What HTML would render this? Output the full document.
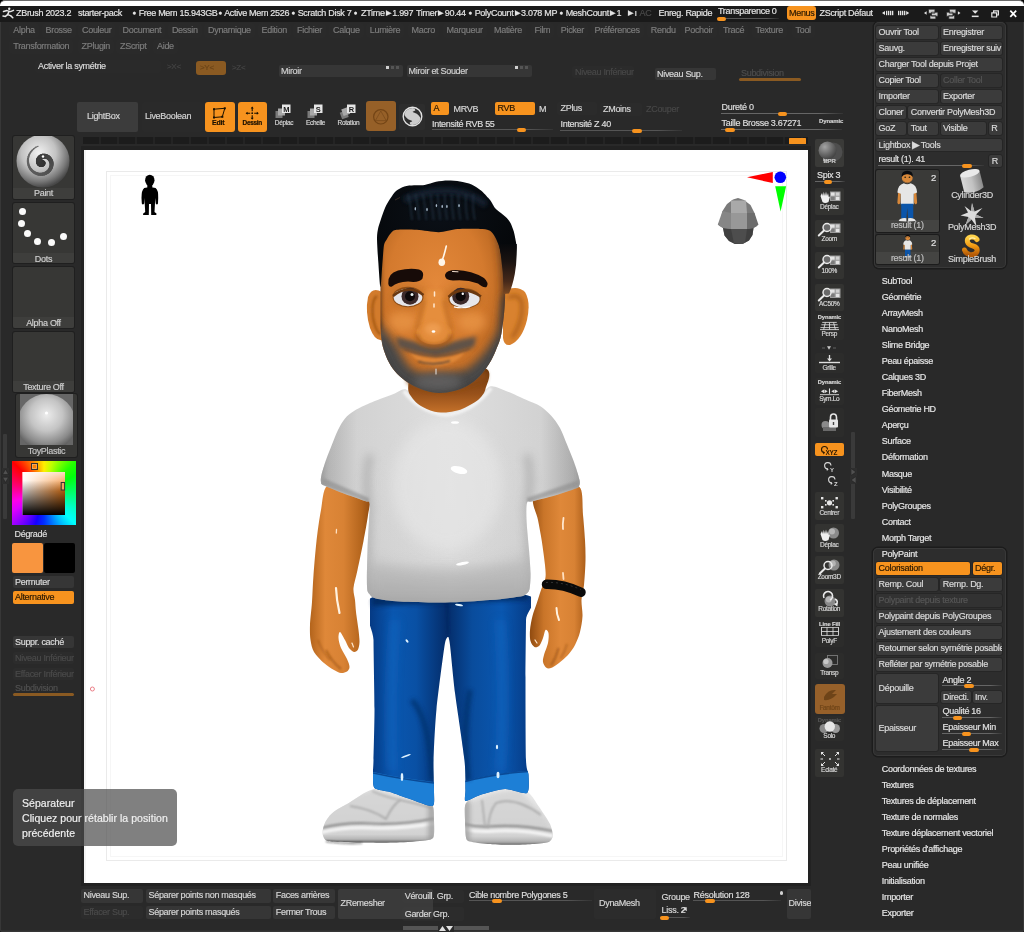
<!DOCTYPE html>
<html lang="fr"><head><meta charset="utf-8"><title>ZBrush 2023.2</title>
<style>
html,body{margin:0;padding:0;background:#000;}
body{width:1024px;height:932px;overflow:hidden;position:relative;font-family:"Liberation Sans",sans-serif;font-size:9px;letter-spacing:-0.3px;color:#d8d8d8;-webkit-text-stroke:0.18px;}
#w{position:absolute;left:0;top:0;width:1024px;height:932px;background:#000;overflow:hidden;opacity:0.999;}
#w div{position:absolute;white-space:nowrap;}
#w svg{position:absolute;overflow:visible;}
.t{white-space:nowrap;}
.b{overflow:hidden;}
.dim{color:#6a6a6a;}
.m{color:#7c7c7c;}
.lst{color:#e6e6e6;}
</style></head>
<body>
<div id="w">
<div style="left:0px;top:0px;width:1024px;height:7px;background:#fff;border-radius:5px 5px 0 0;border-top:1px solid #6a6a6a;box-sizing:border-box;"></div>
<div style="left:0px;top:5.6px;width:1024px;height:926.4px;background:#292929;border-radius:0 0 2.5px 2.5px;box-shadow:inset 1px 0 0 #373737, inset -1px 0 0 #373737, inset 0 -1.5px 0 #363636;"></div>
<div style="left:0px;top:5.6px;width:1024px;height:16.2px;background:#1a1a1a;"></div>
<svg style="left:2px;top:7px" width="13" height="12" viewBox="0 0 13 12"><g fill="none" stroke="#e8e8e8" stroke-width="1.5" stroke-linecap="round" stroke-linejoin="round"><circle cx="7.2" cy="1.8" r="1.2" fill="#e8e8e8" stroke="none"/><path d="M1.5 4.5 L5 3.6 L8.5 4.6 L11.5 3.4"/><path d="M7 4.6 L5.6 7.6 L8.6 8.6 L10.8 10.8"/><path d="M5.6 7.6 L3.4 9.4 L1 9"/></g></svg>
<div class="t" style="left:16px;top:7px;height:12px;line-height:12px;color:#e4e4e4;">ZBrush 2023.2</div>
<div class="t" style="left:78px;top:7px;height:12px;line-height:12px;color:#e4e4e4;">starter-pack</div>
<div class="t" style="left:132.5px;top:7px;height:12px;line-height:12px;color:#e4e4e4;"><span style="font-size:6.5px;letter-spacing:0;position:relative;top:-0.8px">●</span> Free Mem 15.943GB</div>
<div class="t" style="left:218.5px;top:7px;height:12px;line-height:12px;color:#e4e4e4;"><span style="font-size:6.5px;letter-spacing:0;position:relative;top:-0.8px">●</span> Active Mem 2526</div>
<div class="t" style="left:291.5px;top:7px;height:12px;line-height:12px;color:#e4e4e4;"><span style="font-size:6.5px;letter-spacing:0;position:relative;top:-0.8px">●</span> Scratch Disk 7 <span style="font-size:6.5px;letter-spacing:0;position:relative;top:-0.8px">●</span></div>
<div class="t" style="left:361px;top:7px;height:12px;line-height:12px;color:#e4e4e4;">ZTime<span style="font-size:6.5px;letter-spacing:0;position:relative;top:-0.8px;padding:0 1.4px 0 1.2px">▶</span>1.997</div>
<div class="t" style="left:416px;top:7px;height:12px;line-height:12px;color:#e4e4e4;">Timer<span style="font-size:6.5px;letter-spacing:0;position:relative;top:-0.8px;padding:0 1.4px 0 1.2px">▶</span>90.44</div>
<div class="t" style="left:468.5px;top:7px;height:12px;line-height:12px;color:#e4e4e4;"><span style="font-size:6.5px;letter-spacing:0;position:relative;top:-0.8px">●</span> PolyCount<span style="font-size:6.5px;letter-spacing:0;position:relative;top:-0.8px;padding:0 1.4px 0 1.2px">▶</span>3.078 MP</div>
<div class="t" style="left:559.5px;top:7px;height:12px;line-height:12px;color:#e4e4e4;"><span style="font-size:6.5px;letter-spacing:0;position:relative;top:-0.8px">●</span> MeshCount<span style="font-size:6.5px;letter-spacing:0;position:relative;top:-0.8px;padding:0 1.4px 0 1.2px">▶</span>1</div>
<div class="t" style="left:627px;top:7px;height:12px;line-height:12px;color:#e4e4e4;"><span style="font-size:6.5px;letter-spacing:0;position:relative;top:-0.8px;padding:0 1.4px 0 1.2px">▶</span>ı</div>
<div class="t" style="left:658.5px;top:7px;height:12px;line-height:12px;color:#e4e4e4;">Enreg. Rapide</div>
<div class="t" style="left:819.5px;top:7px;height:12px;line-height:12px;color:#e4e4e4;">ZScript Défaut</div>
<div class="t" style="left:639.5px;top:7px;height:12px;line-height:12px;color:#4a4a4a;">AC</div>
<div class="t" style="left:718px;top:5px;height:12px;line-height:12px;color:#e4e4e4;">Transparence 0</div>
<div style="left:717px;top:18px;width:62px;height:1px;background:linear-gradient(90deg,#555 0,#555 80%,rgba(90,90,90,0.2) 100%)"></div>
<div style="left:717px;top:16.5px;width:9px;height:4px;background:#f7931e;border-radius:2px"></div>
<div class="b" style="left:787px;top:6px;width:28.5px;height:14px;line-height:14px;background:#f7931e;border-radius:3px;padding-left:2px;box-sizing:border-box;color:#2a1800;">Menus</div>
<svg style="left:878px;top:8px" width="140" height="12" viewBox="0 0 140 12"><g fill="#e4e4e4"><path d="M4 5 L7 3 L7 7 Z"/><rect x="8" y="2.8" width="1.3" height="4.4"/><rect x="10" y="2.8" width="1.3" height="4.4"/><rect x="12" y="2.8" width="1.3" height="4.4"/><rect x="14" y="2.8" width="1.3" height="4.4"/><rect x="20" y="2.8" width="1.3" height="4.4"/><rect x="22" y="2.8" width="1.3" height="4.4"/><rect x="24" y="2.8" width="1.3" height="4.4"/><rect x="26" y="2.8" width="1.3" height="4.4"/><path d="M31.2 5 L28.2 3 L28.2 7 Z"/><path d="M46 5 L48.6 3.2 L48.6 6.8 Z"/><g fill="#cfcfcf" stroke="#222" stroke-width="0.7"><path d="M50.5 1.2h6.4v4h-6.4z M53.5 4.2h6.4v4h-6.4z M52 7.6h5.8v3.4h-5.8z"/><path d="M71.5 1.2h6.4v4h-6.4z M68.5 4.2h6.4v4h-6.4z M70.8 7.6h5.8v3.4h-5.8z"/></g><path d="M82.5 5 L79.9 3.2 L79.9 6.8 Z"/><path d="M94 2.6h6.4l-3.2 3.2z"/><rect x="93.8" y="7.6" width="6.8" height="1.5"/><path d="M113.8 4.8h4.8v4.2h-4.8z M115.6 4.6v-1.8h4.8v4.2h-1.6" fill="none" stroke="#e4e4e4" stroke-width="1.2"/><path d="M132.3 2.7 L138.2 8.8 M138.2 2.7 L132.3 8.8" stroke="#fff" stroke-width="1.7" fill="none"/></g></svg>
<div style="left:9.3px;top:23px;width:29.5px;height:15px;background:#2a2a2a;border-radius:3px;"></div>
<div class="t m" style="left:13.3px;top:24.0px;height:12px;line-height:12px;">Alpha</div>
<div style="left:41.5px;top:23px;width:34.2px;height:15px;background:#2a2a2a;border-radius:3px;"></div>
<div class="t m" style="left:45.5px;top:24.0px;height:12px;line-height:12px;">Brosse</div>
<div style="left:78px;top:23px;width:37.4px;height:15px;background:#2a2a2a;border-radius:3px;"></div>
<div class="t m" style="left:82px;top:24.0px;height:12px;line-height:12px;">Couleur</div>
<div style="left:118.6px;top:23px;width:46.6px;height:15px;background:#2a2a2a;border-radius:3px;"></div>
<div class="t m" style="left:122.6px;top:24.0px;height:12px;line-height:12px;">Document</div>
<div style="left:167.9px;top:23px;width:33.7px;height:15px;background:#2a2a2a;border-radius:3px;"></div>
<div class="t m" style="left:171.9px;top:24.0px;height:12px;line-height:12px;">Dessin</div>
<div style="left:204px;top:23px;width:50.8px;height:15px;background:#2a2a2a;border-radius:3px;"></div>
<div class="t m" style="left:208px;top:24.0px;height:12px;line-height:12px;">Dynamique</div>
<div style="left:257.5px;top:23px;width:33.4px;height:15px;background:#2a2a2a;border-radius:3px;"></div>
<div class="t m" style="left:261.5px;top:24.0px;height:12px;line-height:12px;">Edition</div>
<div style="left:293px;top:23px;width:32.9px;height:15px;background:#2a2a2a;border-radius:3px;"></div>
<div class="t m" style="left:297px;top:24.0px;height:12px;line-height:12px;">Fichier</div>
<div style="left:329px;top:23px;width:34.7px;height:15px;background:#2a2a2a;border-radius:3px;"></div>
<div class="t m" style="left:333px;top:24.0px;height:12px;line-height:12px;">Calque</div>
<div style="left:365.75px;top:23px;width:38.4px;height:15px;background:#2a2a2a;border-radius:3px;"></div>
<div class="t m" style="left:369.75px;top:24.0px;height:12px;line-height:12px;">Lumière</div>
<div style="left:407.5px;top:23px;width:31.5px;height:15px;background:#2a2a2a;border-radius:3px;"></div>
<div class="t m" style="left:411.5px;top:24.0px;height:12px;line-height:12px;">Macro</div>
<div style="left:442.5px;top:23px;width:44.1px;height:15px;background:#2a2a2a;border-radius:3px;"></div>
<div class="t m" style="left:446.5px;top:24.0px;height:12px;line-height:12px;">Marqueur</div>
<div style="left:490px;top:23px;width:35.9px;height:15px;background:#2a2a2a;border-radius:3px;"></div>
<div class="t m" style="left:494px;top:24.0px;height:12px;line-height:12px;">Matière</div>
<div style="left:530.5px;top:23px;width:23.8px;height:15px;background:#2a2a2a;border-radius:3px;"></div>
<div class="t m" style="left:534.5px;top:24.0px;height:12px;line-height:12px;">Film</div>
<div style="left:556.75px;top:23px;width:31.2px;height:15px;background:#2a2a2a;border-radius:3px;"></div>
<div class="t m" style="left:560.75px;top:24.0px;height:12px;line-height:12px;">Picker</div>
<div style="left:590.5px;top:23px;width:53.2px;height:15px;background:#2a2a2a;border-radius:3px;"></div>
<div class="t m" style="left:594.5px;top:24.0px;height:12px;line-height:12px;">Préférences</div>
<div style="left:646.75px;top:23px;width:33.0px;height:15px;background:#2a2a2a;border-radius:3px;"></div>
<div class="t m" style="left:650.75px;top:24.0px;height:12px;line-height:12px;">Rendu</div>
<div style="left:680.5px;top:23px;width:36.4px;height:15px;background:#2a2a2a;border-radius:3px;"></div>
<div class="t m" style="left:684.5px;top:24.0px;height:12px;line-height:12px;">Pochoir</div>
<div style="left:719px;top:23px;width:29.171875px;height:15px;background:#2a2a2a;border-radius:3px;"></div>
<div class="t m" style="left:723px;top:24.0px;height:12px;line-height:12px;">Tracé</div>
<div style="left:751.5px;top:23px;width:35.4px;height:15px;background:#2a2a2a;border-radius:3px;"></div>
<div class="t m" style="left:755.5px;top:24.0px;height:12px;line-height:12px;">Texture</div>
<div style="left:791.5px;top:23px;width:23.3px;height:15px;background:#2a2a2a;border-radius:3px;"></div>
<div class="t m" style="left:795.5px;top:24.0px;height:12px;line-height:12px;">Tool</div>
<div style="left:9.3px;top:39px;width:63.971875px;height:15px;background:#2a2a2a;border-radius:3px;"></div>
<div class="t m" style="left:13.3px;top:40.0px;height:12px;line-height:12px;">Transformation</div>
<div style="left:77.6px;top:39px;width:36.4px;height:15px;background:#2a2a2a;border-radius:3px;"></div>
<div class="t m" style="left:81.6px;top:40.0px;height:12px;line-height:12px;">ZPlugin</div>
<div style="left:116px;top:39px;width:34.4px;height:15px;background:#2a2a2a;border-radius:3px;"></div>
<div class="t m" style="left:120px;top:40.0px;height:12px;line-height:12px;">ZScript</div>
<div style="left:153px;top:39px;width:24.8px;height:15px;background:#2a2a2a;border-radius:3px;"></div>
<div class="t m" style="left:157px;top:40.0px;height:12px;line-height:12px;">Aide</div>
<div style="left:35px;top:60px;width:126px;height:12.5px;background:#2a2a2a;border-radius:2px;"></div>
<div class="t" style="left:38px;top:60.0px;height:12px;line-height:12px;color:#dcdcdc;">Activer la symétrie</div>
<div class="t" style="left:167px;top:61.0px;height:12px;line-height:12px;color:#454545;font-size:8px">&gt;X&lt;</div>
<div style="left:196px;top:61px;width:30px;height:14px;background:#8a5a22;border-radius:3px;"></div>
<div class="t" style="left:200px;top:61.5px;height:12px;line-height:12px;color:#6b4418;font-size:8px">&gt;Y&lt;</div>
<div class="t" style="left:232px;top:62.0px;height:12px;line-height:12px;color:#454545;font-size:8px">&gt;Z&lt;</div>
<div class="b" style="left:279px;top:64.5px;width:124px;height:12.5px;line-height:12.5px;background:#363636;border-radius:2px;padding-left:2px;box-sizing:border-box;color:#cfcfcf;">Miroir</div>
<div class="b" style="left:406.5px;top:64.5px;width:125.5px;height:12.5px;line-height:12.5px;background:#363636;border-radius:2px;padding-left:2px;box-sizing:border-box;color:#cfcfcf;">Miroir et Souder</div>
<div style="left:386px;top:66px;width:3px;height:3px;background:#d0d0d0;"></div>
<div style="left:515px;top:66px;width:3px;height:3px;background:#d0d0d0;"></div>
<div style="left:391px;top:66px;width:3px;height:3px;background:#555;"></div>
<div style="left:520px;top:66px;width:3px;height:3px;background:#555;"></div>
<div style="left:396px;top:66px;width:3px;height:3px;background:#555;"></div>
<div style="left:525px;top:66px;width:3px;height:3px;background:#555;"></div>
<div class="b" style="left:572px;top:66px;width:62px;height:12px;line-height:12px;background:#2b2b2b;border-radius:2px;padding-left:3px;box-sizing:border-box;color:#484848;">Niveau Inférieur</div>
<div class="b" style="left:655px;top:67.5px;width:61px;height:12px;line-height:12px;background:#363636;border-radius:2px;padding-left:2px;box-sizing:border-box;color:#d8d8d8;">Niveau Sup.</div>
<div class="t" style="left:741px;top:67.0px;height:12px;line-height:12px;color:#4d4d4d">Subdivision</div>
<div style="left:739px;top:78px;width:62px;height:3px;background:#8a5a22;border-radius:1.5px;"></div>
<div class="b" style="left:77px;top:102px;width:61px;height:29.5px;line-height:29.5px;background:#3c3c3c;border-radius:2px;padding-left:10px;box-sizing:border-box;color:#d4d4d4;">LightBox</div>
<div class="b" style="left:141.5px;top:102px;width:61px;height:29.5px;line-height:29.5px;background:#2a2a2a;border-radius:2px;padding-left:3.5px;box-sizing:border-box;color:#d4d4d4;">LiveBoolean</div>
<div style="left:205px;top:102px;width:29.5px;height:29.5px;background:#f7931e;border-radius:3px;"></div>
<div style="left:237.5px;top:102px;width:29.5px;height:29.5px;background:#f7931e;border-radius:3px;"></div>
<svg style="left:205px;top:102px" width="30" height="30" viewBox="0 0 30 30"><path d="M9 7.2 L19.8 6.3 L17.3 14.8 L9 15.5 Z" fill="none" stroke="#1a1000" stroke-width="1"/><g fill="#1a1000"><rect x="8" y="6.2" width="2" height="2"/><rect x="18.8" y="5.3" width="2" height="2"/><rect x="16.3" y="13.8" width="2" height="2"/><rect x="8" y="14.5" width="2" height="2"/></g></svg>
<div class="t" style="left:212px;top:119.0px;height:8px;line-height:8px;color:#1a1000;font-size:7px;letter-spacing:-0.2px;font-weight:bold">Edit</div>
<svg style="left:237.5px;top:102px" width="30" height="30" viewBox="0 0 30 30"><g stroke="#1a1000" stroke-width="1.1" fill="none"><path d="M14.2 5.6v3.6 M14.2 13.2v3.6 M8.4 11.2h3.8 M16.2 11.2h3.8"/></g><g fill="#1a1000"><path d="M14.2 4.6l1.5 2h-3z M14.2 17.8l1.5-2h-3z M7.6 11.2l2-1.5v3z M20.8 11.2l-2-1.5v3z"/><circle cx="14.2" cy="11.2" r="0.9"/></g></svg>
<div class="t" style="left:242.5px;top:119.0px;height:8px;line-height:8px;color:#1a1000;font-size:6.5px;letter-spacing:-0.3px;font-weight:bold">Dessin</div>
<svg style="left:272px;top:103px" width="24" height="18" viewBox="0 0 24 18"><g transform="rotate(0 8 11)"><rect x="3.5" y="8" width="7" height="7" fill="#7a7a7a"/><rect x="6" y="5.5" width="7" height="7" fill="#a8a8a8"/></g><rect x="10" y="1.5" width="8.5" height="8.5" fill="#e6e6e6"/><text x="14.2" y="8.6" font-family="Liberation Sans, sans-serif" font-size="7.5" font-weight="bold" text-anchor="middle" fill="#1c1c1c">M</text></svg>
<div class="t" style="left:269px;top:118.5px;width:30px;text-align:center;height:8px;line-height:8px;font-size:6.5px;letter-spacing:-0.3px;color:#d6d6d6">Déplac</div>
<svg style="left:303.5px;top:103px" width="24" height="18" viewBox="0 0 24 18"><g transform="rotate(0 8 11)"><rect x="3.5" y="8" width="7" height="7" fill="#7a7a7a"/><rect x="6" y="5.5" width="7" height="7" fill="#a8a8a8"/></g><rect x="10" y="1.5" width="8.5" height="8.5" fill="#e6e6e6"/><text x="14.2" y="8.6" font-family="Liberation Sans, sans-serif" font-size="7.5" font-weight="bold" text-anchor="middle" fill="#1c1c1c">S</text></svg>
<div class="t" style="left:300.5px;top:118.5px;width:30px;text-align:center;height:8px;line-height:8px;font-size:6.5px;letter-spacing:-0.3px;color:#d6d6d6">Echelle</div>
<svg style="left:336.5px;top:103px" width="24" height="18" viewBox="0 0 24 18"><g transform="rotate(-20 8 11)"><rect x="3.5" y="8" width="7" height="7" fill="#7a7a7a"/><rect x="6" y="5.5" width="7" height="7" fill="#a8a8a8"/></g><rect x="10" y="1.5" width="8.5" height="8.5" fill="#e6e6e6"/><text x="14.2" y="8.6" font-family="Liberation Sans, sans-serif" font-size="7.5" font-weight="bold" text-anchor="middle" fill="#1c1c1c">R</text></svg>
<div class="t" style="left:333.5px;top:118.5px;width:30px;text-align:center;height:8px;line-height:8px;font-size:6.5px;letter-spacing:-0.3px;color:#d6d6d6">Rotation</div>
<div style="left:365.8px;top:101.2px;width:29.8px;height:30.2px;background:#966028;border-radius:3px;"></div>
<svg style="left:365.5px;top:101.5px" width="30" height="30" viewBox="0 0 30 30"><circle cx="14.8" cy="14.8" r="7.2" fill="none" stroke="#744516" stroke-width="1.2"/><path d="M14.8 9 L20.2 18.6 L9.4 18.6 Z" fill="none" stroke="#7a4a1a" stroke-width="0.8"/></svg>
<div style="left:398.5px;top:104px;width:26.5px;height:26px;background:#2d2d2d;border-radius:2px;"></div>
<svg style="left:401px;top:105px" width="23" height="23" viewBox="-11.5 -11.5 23 23"><defs><clipPath id="cS"><circle cx="0" cy="0" r="8.6"/></clipPath></defs><circle cx="0" cy="0" r="9.3" fill="#303030" stroke="#e2e2e2" stroke-width="1.4"/><g clip-path="url(#cS)"><path d="M1.5 -10 C-7.5 -7 -4.5 -1.5 0 0 C4.5 1.5 7.5 7 -1.5 10" stroke="#cdcdcd" stroke-width="8.6" fill="none"/></g></svg>
<div class="b" style="left:430.5px;top:102px;width:18px;height:13px;line-height:13px;background:#f7931e;border-radius:2px;padding-left:3px;box-sizing:border-box;color:#2a1800;">A</div>
<div class="t" style="left:453.5px;top:102.5px;height:12px;line-height:12px;color:#d6d6d6">MRVB</div>
<div class="b" style="left:494.5px;top:102px;width:40px;height:13px;line-height:13px;background:#f7931e;border-radius:2px;padding-left:3px;box-sizing:border-box;color:#2a1800;">RVB</div>
<div class="t" style="left:539px;top:102.5px;height:12px;line-height:12px;color:#d6d6d6">M</div>
<div class="t" style="left:432px;top:117.5px;height:12px;line-height:12px;color:#dedede">Intensité RVB 55</div>
<div style="left:432px;top:129px;width:121px;height:1px;background:linear-gradient(90deg,#555 0,#555 80%,rgba(90,90,90,0.2) 100%)"></div>
<div style="left:517px;top:127.5px;width:9px;height:4px;background:#f7931e;border-radius:2px"></div>
<div class="b" style="left:557px;top:102px;width:40px;height:13px;line-height:13px;background:#2b2b2b;border-radius:2px;padding-left:3.5px;box-sizing:border-box;color:#d6d6d6;">ZPlus</div>
<div class="b" style="left:599.5px;top:103px;width:42px;height:13px;line-height:13px;background:#2b2b2b;border-radius:2px;padding-left:3.5px;box-sizing:border-box;color:#d6d6d6;">ZMoins</div>
<div class="t" style="left:646px;top:103.0px;height:12px;line-height:12px;color:#474747">ZCouper</div>
<div class="t" style="left:560.5px;top:118.0px;height:12px;line-height:12px;color:#dedede">Intensité Z 40</div>
<div style="left:560px;top:130px;width:122px;height:1px;background:linear-gradient(90deg,#555 0,#555 80%,rgba(90,90,90,0.2) 100%)"></div>
<div style="left:632px;top:128.5px;width:9.5px;height:4px;background:#f7931e;border-radius:2px"></div>
<div class="t" style="left:721.5px;top:100.8px;height:12px;line-height:12px;color:#dedede">Dureté 0</div>
<div style="left:721px;top:113px;width:122px;height:1px;background:linear-gradient(90deg,#666 0,#666 80%,rgba(90,90,90,0.2) 100%)"></div>
<div style="left:777.5px;top:111.5px;width:9.5px;height:4px;background:#f7931e;border-radius:2px"></div>
<div class="t" style="left:721.5px;top:117.0px;height:12px;line-height:12px;color:#dedede">Taille Brosse 3.67271</div>
<div style="left:721px;top:129px;width:121px;height:1px;background:linear-gradient(90deg,#666 0,#666 80%,rgba(90,90,90,0.2) 100%)"></div>
<div style="left:725px;top:127.5px;width:9.5px;height:4px;background:#f7931e;border-radius:2px"></div>
<div class="t" style="left:819px;top:117.0px;height:8px;line-height:8px;color:#d0d0d0;font-size:6px;font-weight:bold;letter-spacing:-0.1px">Dynamic</div>
<div style="left:13px;top:136px;width:61px;height:62.5px;background:#373735;border-radius:2px;box-shadow:0 0 0 1px #1f1f1f;"></div>
<div style="left:13px;top:188px;width:61px;height:10.5px;background:#3e3e3c;border-radius:0 0 2px 2px;"></div>
<div class="t" style="left:13px;top:187.5px;width:61px;text-align:center;height:10.5px;line-height:10.5px;color:#cfcfcf">Paint</div>
<svg style="left:15px;top:134px" width="56" height="54" viewBox="0 0 56 54"><defs><radialGradient id="gp" cx="0.42" cy="0.35" r="0.65"><stop offset="0" stop-color="#f2f2f2"/><stop offset="0.5" stop-color="#c2c2c2"/><stop offset="0.82" stop-color="#7a7a7a"/><stop offset="1" stop-color="#484848"/></radialGradient><clipPath id="cpp"><rect x="0" y="2" width="56" height="52"/></clipPath></defs><g clip-path="url(#cpp)"><circle cx="28" cy="27" r="26.5" fill="url(#gp)"/><g fill="none"><path d="M27.5 29.1L27.3 29.4" stroke="rgb(52,52,52)" stroke-width="6.2" stroke-linecap="round"/><path d="M27.3 29.4L27.1 29.6" stroke="rgb(52,52,52)" stroke-width="6.2" stroke-linecap="round"/><path d="M27.1 29.6L26.8 29.7" stroke="rgb(52,52,52)" stroke-width="6.2" stroke-linecap="round"/><path d="M26.8 29.7L26.5 29.8" stroke="rgb(52,52,52)" stroke-width="6.2" stroke-linecap="round"/><path d="M26.5 29.8L26.1 29.8" stroke="rgb(53,53,53)" stroke-width="6.2" stroke-linecap="round"/><path d="M26.1 29.8L25.7 29.8" stroke="rgb(53,53,53)" stroke-width="6.2" stroke-linecap="round"/><path d="M25.7 29.8L25.3 29.6" stroke="rgb(54,54,54)" stroke-width="6.2" stroke-linecap="round"/><path d="M25.3 29.6L24.9 29.3" stroke="rgb(54,54,54)" stroke-width="6.0" stroke-linecap="round"/><path d="M24.9 29.3L24.5 29.0" stroke="rgb(55,55,55)" stroke-width="6.0" stroke-linecap="round"/><path d="M24.5 29.0L24.2 28.5" stroke="rgb(55,55,55)" stroke-width="5.9" stroke-linecap="round"/><path d="M24.2 28.5L24.0 28.0" stroke="rgb(56,56,56)" stroke-width="5.8" stroke-linecap="round"/><path d="M24.0 28.0L23.8 27.4" stroke="rgb(56,56,56)" stroke-width="5.7" stroke-linecap="round"/><path d="M23.8 27.4L23.8 26.7" stroke="rgb(57,57,57)" stroke-width="5.6" stroke-linecap="round"/><path d="M23.8 26.7L23.9 26.0" stroke="rgb(58,58,58)" stroke-width="5.6" stroke-linecap="round"/><path d="M23.9 26.0L24.1 25.3" stroke="rgb(58,58,58)" stroke-width="5.5" stroke-linecap="round"/><path d="M24.1 25.3L24.5 24.6" stroke="rgb(59,59,59)" stroke-width="5.4" stroke-linecap="round"/><path d="M24.5 24.6L25.0 24.0" stroke="rgb(60,60,60)" stroke-width="5.3" stroke-linecap="round"/><path d="M25.0 24.0L25.6 23.4" stroke="rgb(61,61,61)" stroke-width="5.2" stroke-linecap="round"/><path d="M25.6 23.4L26.3 22.9" stroke="rgb(61,61,61)" stroke-width="5.2" stroke-linecap="round"/><path d="M26.3 22.9L27.2 22.5" stroke="rgb(62,62,62)" stroke-width="5.1" stroke-linecap="round"/><path d="M27.2 22.5L28.1 22.3" stroke="rgb(63,63,63)" stroke-width="5.0" stroke-linecap="round"/><path d="M28.1 22.3L29.1 22.2" stroke="rgb(64,64,64)" stroke-width="4.9" stroke-linecap="round"/><path d="M29.1 22.2L30.2 22.2" stroke="rgb(65,65,65)" stroke-width="4.8" stroke-linecap="round"/><path d="M30.2 22.2L31.2 22.5" stroke="rgb(66,66,66)" stroke-width="4.8" stroke-linecap="round"/><path d="M31.2 22.5L32.3 22.9" stroke="rgb(67,67,67)" stroke-width="4.7" stroke-linecap="round"/><path d="M32.3 22.9L33.3 23.5" stroke="rgb(68,68,68)" stroke-width="4.6" stroke-linecap="round"/><path d="M33.3 23.5L34.2 24.3" stroke="rgb(69,69,69)" stroke-width="4.5" stroke-linecap="round"/><path d="M34.2 24.3L35.0 25.3" stroke="rgb(69,69,69)" stroke-width="4.4" stroke-linecap="round"/><path d="M35.0 25.3L35.7 26.4" stroke="rgb(70,70,70)" stroke-width="4.3" stroke-linecap="round"/><path d="M35.7 26.4L36.2 27.6" stroke="rgb(71,71,71)" stroke-width="4.3" stroke-linecap="round"/><path d="M36.2 27.6L36.5 28.9" stroke="rgb(73,73,73)" stroke-width="4.2" stroke-linecap="round"/><path d="M36.5 28.9L36.6 30.3" stroke="rgb(74,74,74)" stroke-width="4.1" stroke-linecap="round"/><path d="M36.6 30.3L36.4 31.8" stroke="rgb(75,75,75)" stroke-width="4.0" stroke-linecap="round"/><path d="M36.4 31.8L36.1 33.2" stroke="rgb(76,76,76)" stroke-width="3.9" stroke-linecap="round"/><path d="M36.1 33.2L35.5 34.6" stroke="rgb(77,77,77)" stroke-width="3.8" stroke-linecap="round"/><path d="M35.5 34.6L34.6 36.0" stroke="rgb(78,78,78)" stroke-width="3.7" stroke-linecap="round"/><path d="M34.6 36.0L33.6 37.2" stroke="rgb(79,79,79)" stroke-width="3.6" stroke-linecap="round"/><path d="M33.6 37.2L32.3 38.2" stroke="rgb(80,80,80)" stroke-width="3.6" stroke-linecap="round"/><path d="M32.3 38.2L30.9 39.1" stroke="rgb(81,81,81)" stroke-width="3.5" stroke-linecap="round"/><path d="M30.9 39.1L29.3 39.8" stroke="rgb(82,82,82)" stroke-width="3.4" stroke-linecap="round"/><path d="M29.3 39.8L27.6 40.2" stroke="rgb(84,84,84)" stroke-width="3.3" stroke-linecap="round"/><path d="M27.6 40.2L25.8 40.3" stroke="rgb(85,85,85)" stroke-width="3.2" stroke-linecap="round"/><path d="M25.8 40.3L23.9 40.2" stroke="rgb(86,86,86)" stroke-width="3.1" stroke-linecap="round"/><path d="M23.9 40.2L22.1 39.7" stroke="rgb(87,87,87)" stroke-width="3.0" stroke-linecap="round"/><path d="M22.1 39.7L20.3 39.0" stroke="rgb(89,89,89)" stroke-width="2.9" stroke-linecap="round"/><path d="M20.3 39.0L18.6 38.0" stroke="rgb(90,90,90)" stroke-width="2.8" stroke-linecap="round"/><path d="M18.6 38.0L17.0 36.7" stroke="rgb(91,91,91)" stroke-width="2.7" stroke-linecap="round"/><path d="M17.0 36.7L15.7 35.2" stroke="rgb(92,92,92)" stroke-width="2.6" stroke-linecap="round"/><path d="M15.7 35.2L14.5 33.4" stroke="rgb(94,94,94)" stroke-width="2.5" stroke-linecap="round"/><path d="M14.5 33.4L13.7 31.4" stroke="rgb(95,95,95)" stroke-width="2.4" stroke-linecap="round"/><path d="M13.7 31.4L13.1 29.3" stroke="rgb(96,96,96)" stroke-width="2.3" stroke-linecap="round"/><path d="M13.1 29.3L12.9 27.1" stroke="rgb(98,98,98)" stroke-width="2.2" stroke-linecap="round"/><path d="M12.9 27.1L13.0 24.9" stroke="rgb(99,99,99)" stroke-width="2.1" stroke-linecap="round"/><path d="M13.0 24.9L13.5 22.6" stroke="rgb(100,100,100)" stroke-width="1.9" stroke-linecap="round"/><path d="M13.5 22.6L14.3 20.4" stroke="rgb(102,102,102)" stroke-width="1.8" stroke-linecap="round"/><path d="M14.3 20.4L15.5 18.3" stroke="rgb(103,103,103)" stroke-width="1.7" stroke-linecap="round"/><path d="M15.5 18.3L17.0 16.4" stroke="rgb(104,104,104)" stroke-width="1.6" stroke-linecap="round"/><path d="M17.0 16.4L18.8 14.8" stroke="rgb(106,106,106)" stroke-width="1.4" stroke-linecap="round"/><path d="M18.8 14.8L20.8 13.3" stroke="rgb(107,107,107)" stroke-width="1.3" stroke-linecap="round"/><path d="M20.8 13.3L23.1 12.3" stroke="rgb(109,109,109)" stroke-width="1.1" stroke-linecap="round"/></g><circle cx="28" cy="22.5" r="1.2" fill="#fff"/></g></svg>
<div style="left:13px;top:202.5px;width:61px;height:60.5px;background:#373735;border-radius:2px;box-shadow:0 0 0 1px #1f1f1f;"></div>
<div style="left:13px;top:252.5px;width:61px;height:10.5px;background:#3e3e3c;border-radius:0 0 2px 2px;"></div>
<div class="t" style="left:13px;top:253.5px;width:61px;text-align:center;height:10.5px;line-height:10.5px;color:#cfcfcf">Dots</div>
<div style="left:18.5px;top:207.5px;width:7px;height:7px;background:#fafafa;border-radius:4px;"></div>
<div style="left:18.0px;top:219.5px;width:7px;height:7px;background:#fafafa;border-radius:4px;"></div>
<div style="left:24.0px;top:229.5px;width:7px;height:7px;background:#fafafa;border-radius:4px;"></div>
<div style="left:33.5px;top:237.5px;width:7px;height:7px;background:#fafafa;border-radius:4px;"></div>
<div style="left:47.5px;top:238.5px;width:7px;height:7px;background:#fafafa;border-radius:4px;"></div>
<div style="left:60.0px;top:233.0px;width:7px;height:7px;background:#fafafa;border-radius:4px;"></div>
<div style="left:13px;top:267px;width:61px;height:60.5px;background:#373735;border-radius:2px;box-shadow:0 0 0 1px #1f1f1f;"></div>
<div style="left:13px;top:316.5px;width:61px;height:11.0px;background:#3e3e3c;border-radius:0 0 2px 2px;"></div>
<div class="t" style="left:13px;top:317.8px;width:61px;text-align:center;height:11.0px;line-height:11.0px;color:#cfcfcf">Alpha Off</div>
<div style="left:13px;top:331.5px;width:61px;height:60.5px;background:#373735;border-radius:2px;box-shadow:0 0 0 1px #1f1f1f;"></div>
<div style="left:13px;top:381px;width:61px;height:11.0px;background:#3e3e3c;border-radius:0 0 2px 2px;"></div>
<div class="t" style="left:13px;top:381.7px;width:61px;text-align:center;height:11.0px;line-height:11.0px;color:#cfcfcf">Texture Off</div>
<div style="left:16px;top:394px;width:61px;height:62.5px;background:#373735;border-radius:2px;box-shadow:0 0 0 1px #1f1f1f;"></div>
<svg style="left:20px;top:394px" width="53" height="51" viewBox="0 0 53 51"><defs><radialGradient id="gm" cx="0.5" cy="0.36" r="0.62"><stop offset="0" stop-color="#ececec"/><stop offset="0.45" stop-color="#c4c4c4"/><stop offset="0.8" stop-color="#8a8a8a"/><stop offset="1" stop-color="#5a5a5a"/></radialGradient><clipPath id="cpm"><rect x="0" y="0" width="53" height="51"/></clipPath></defs><rect width="53" height="51" fill="#666"/><g clip-path="url(#cpm)"><circle cx="26.5" cy="29" r="29" fill="url(#gm)"/><circle cx="26.5" cy="19" r="1.6" fill="#fff"/></g></svg>
<div class="t" style="left:16px;top:446px;width:61px;text-align:center;height:11px;line-height:11px;color:#c4c4c4">ToyPlastic</div>
<div style="left:11.5px;top:460.5px;width:64px;height:64.5px;background:conic-gradient(from 315deg at 50% 50%,hsl(0,100%,50%) 0deg,hsl(19,100%,50%) 15deg,hsl(37,100%,50%) 30deg,hsl(56,100%,50%) 45deg,hsl(75,100%,50%) 60deg,hsl(93,100%,50%) 75deg,hsl(112,100%,50%) 90deg,hsl(123,100%,50%) 105deg,hsl(135,100%,50%) 120deg,hsl(146,100%,50%) 135deg,hsl(157,100%,50%) 150deg,hsl(169,100%,50%) 165deg,hsl(180,100%,50%) 180deg,hsl(196,100%,50%) 195deg,hsl(213,100%,50%) 210deg,hsl(229,100%,50%) 225deg,hsl(245,100%,50%) 240deg,hsl(262,100%,50%) 255deg,hsl(278,100%,50%) 270deg,hsl(292,100%,50%) 285deg,hsl(305,100%,50%) 300deg,hsl(319,100%,50%) 315deg,hsl(333,100%,50%) 330deg,hsl(346,100%,50%) 345deg,hsl(360,100%,50%) 360deg);"></div>
<svg style="left:11.5px;top:460.5px" width="64" height="64.5" viewBox="0 0 64 64.5"><defs>
<linearGradient id="svH" x1="0" x2="1" y1="0" y2="0"><stop offset="0" stop-color="#fff"/><stop offset="1" stop-color="#f27a10"/></linearGradient>
<linearGradient id="svW" x1="0" x2="0" y1="0" y2="1"><stop offset="0" stop-color="#fff" stop-opacity="0.75"/><stop offset="0.45" stop-color="#fff" stop-opacity="0"/></linearGradient>
<linearGradient id="svV" x1="0" x2="0" y1="0" y2="1"><stop offset="0.2" stop-color="#000" stop-opacity="0"/><stop offset="1" stop-color="#000"/></linearGradient>
</defs>
<rect x="10.5" y="11" width="42.5" height="43" fill="url(#svH)"/><rect x="10.5" y="11" width="42.5" height="43" fill="url(#svW)"/><rect x="10.5" y="11" width="42.5" height="43" fill="url(#svV)"/>
<rect x="19.5" y="2.5" width="6" height="6" fill="#ff8000" stroke="#333" stroke-width="1"/><rect x="20.6" y="3.6" width="3.8" height="3.8" fill="none" stroke="#e8c8a0" stroke-width="0.5"/>
<rect x="49.2" y="21.5" width="3.4" height="7.5" fill="#f0a060" stroke="#333" stroke-width="1"/>
</svg>
<div class="t" style="left:14.5px;top:527.5px;height:12px;line-height:12px;color:#dedede">Dégradé</div>
<div style="left:12px;top:542.5px;width:30.5px;height:30px;background:#f8953f;border-radius:2px;"></div>
<div style="left:44px;top:542.5px;width:30.5px;height:30px;background:#000;border-radius:2px;"></div>
<div class="b" style="left:13px;top:575.5px;width:61px;height:12.5px;line-height:12.5px;background:#363636;border-radius:2px;padding-left:2px;box-sizing:border-box;color:#dcdcdc;">Permuter</div>
<div class="b" style="left:13px;top:591px;width:61px;height:13px;line-height:13px;background:#f7931e;border-radius:2px;padding-left:2px;box-sizing:border-box;color:#2a1800;">Alternative</div>
<div class="b" style="left:13px;top:636px;width:61px;height:12px;line-height:12px;background:#363636;border-radius:2px;padding-left:2px;box-sizing:border-box;color:#dcdcdc;">Suppr. caché</div>
<div class="b" style="left:13px;top:652px;width:61px;height:12px;line-height:12px;background:#2c2c2c;border-radius:2px;padding-left:2px;box-sizing:border-box;color:#4a4a4a;">Niveau Inférieur</div>
<div class="b" style="left:13px;top:668px;width:61px;height:12px;line-height:12px;background:#2c2c2c;border-radius:2px;padding-left:2px;box-sizing:border-box;color:#4a4a4a;">Effacer Inférieur</div>
<div class="t" style="left:15px;top:682.0px;height:12px;line-height:12px;color:#505050">Subdivision</div>
<div style="left:13px;top:693px;width:61px;height:3.2px;background:#8a5a22;border-radius:1.5px;"></div>
<div style="left:3px;top:433.5px;width:4px;height:85px;background:#3a3a3a;border-radius:1px;"></div>
<svg style="left:2px;top:468px" width="7" height="16" viewBox="0 0 7 16"><rect x="0" y="0" width="7" height="16" fill="#2e2e2e"/><path d="M0.5 6.5L3.5 1.2L6.5 6.5Z M0.5 9.2L3.5 14.5L6.5 9.2Z" fill="#505050" stroke="#222" stroke-width="0.6"/></svg>
<div style="left:83px;top:137px;width:725px;height:7px;background:repeating-linear-gradient(90deg,#1c1c1c 0,#1c1c1c 16px,#242424 16px,#242424 18px);"></div>
<div style="left:789px;top:138px;width:16.5px;height:5.5px;background:#f7931e;border-radius:0.5px;"></div>
<div style="left:81px;top:146px;width:730px;height:740px;background:#222;"></div>
<div style="left:84px;top:150px;width:724px;height:732.5px;background:#fff;"></div>
<div style="left:105.5px;top:171px;width:681px;height:689.5px;border:1px solid #eaeaea;box-sizing:border-box;"></div>
<div style="left:109.5px;top:175px;width:673px;height:681.5px;border:1px solid #f6f6f6;box-sizing:border-box;"></div>
<div style="left:84px;top:150px;width:2px;height:732.5px;background:#f4f4f4;"></div>
<svg style="left:0;top:0" width="1024" height="932" viewBox="0 0 1024 932"><defs>
<filter id="b1" filterUnits="userSpaceOnUse" x="280" y="160" width="340" height="700"><feGaussianBlur stdDeviation="1"/></filter>
<filter id="b2" filterUnits="userSpaceOnUse" x="280" y="160" width="340" height="700"><feGaussianBlur stdDeviation="2.2"/></filter>
<filter id="b4" filterUnits="userSpaceOnUse" x="280" y="160" width="340" height="700"><feGaussianBlur stdDeviation="4"/></filter>
<filter id="b7" filterUnits="userSpaceOnUse" x="280" y="160" width="340" height="700"><feGaussianBlur stdDeviation="7"/></filter>
<linearGradient id="gShirt" x1="0" x2="1" y1="0" y2="0"><stop offset="0" stop-color="#acacac"/><stop offset="0.14" stop-color="#d2d2d2"/><stop offset="0.5" stop-color="#dfdfdf"/><stop offset="0.85" stop-color="#d2d2d2"/><stop offset="1" stop-color="#a4a4a4"/></linearGradient>
<linearGradient id="gShirtV" x1="0" x2="0" y1="0" y2="1"><stop offset="0" stop-color="#fff" stop-opacity="0"/><stop offset="0.8" stop-color="#888" stop-opacity="0.05"/><stop offset="1" stop-color="#555" stop-opacity="0.45"/></linearGradient>
<linearGradient id="gSkinL" x1="0" x2="1" y1="0" y2="0"><stop offset="0" stop-color="#b3641c"/><stop offset="0.25" stop-color="#df8839"/><stop offset="0.55" stop-color="#d88234"/><stop offset="0.85" stop-color="#b3641c"/><stop offset="1" stop-color="#904b10"/></linearGradient>
<linearGradient id="gSkinR" x1="0" x2="1" y1="0" y2="0"><stop offset="0" stop-color="#904b10"/><stop offset="0.25" stop-color="#c97529"/><stop offset="0.55" stop-color="#df8839"/><stop offset="0.8" stop-color="#d88234"/><stop offset="1" stop-color="#ad5f1a"/></linearGradient>
<linearGradient id="gLegL" x1="0" x2="1" y1="0" y2="0"><stop offset="0" stop-color="#053a84"/><stop offset="0.3" stop-color="#0a57b0"/><stop offset="0.6" stop-color="#0950a4"/><stop offset="1" stop-color="#042c69"/></linearGradient>
<linearGradient id="gLegR" x1="0" x2="1" y1="0" y2="0"><stop offset="0" stop-color="#042c69"/><stop offset="0.3" stop-color="#094c9c"/><stop offset="0.65" stop-color="#0a57b0"/><stop offset="1" stop-color="#053a84"/></linearGradient>
<linearGradient id="gShoe" x1="0" x2="0" y1="0" y2="1"><stop offset="0" stop-color="#ececec"/><stop offset="0.5" stop-color="#e0e0e0"/><stop offset="0.85" stop-color="#d2d2d2"/><stop offset="1" stop-color="#a0a0a0"/></linearGradient>
<radialGradient id="gFace" cx="0.45" cy="0.4" r="0.7"><stop offset="0" stop-color="#e3883a"/><stop offset="0.55" stop-color="#d47a2e"/><stop offset="1" stop-color="#a25616"/></radialGradient>
<radialGradient id="gHair" cx="0.45" cy="0.3" r="0.7"><stop offset="0" stop-color="#0b1017"/><stop offset="1" stop-color="#040608"/></radialGradient>
<clipPath id="cFace"><path id="pFace" d="M381.0 262.0C380.6 273.3 380.5 287.8 380.5 300.0C380.5 312.2 380.3 326.3 381.0 335.0C381.7 343.7 382.8 346.8 384.5 352.0C386.2 357.2 388.5 362.0 391.0 366.0C393.5 370.0 396.2 372.9 399.5 376.0C402.8 379.1 406.8 382.1 411.0 384.5C415.2 386.9 420.3 389.1 425.0 390.5C429.7 391.9 434.2 392.9 439.0 393.0C443.8 393.1 449.2 392.2 454.0 391.0C458.8 389.8 463.8 387.9 468.0 385.5C472.2 383.1 476.0 380.1 479.5 376.5C483.0 372.9 486.2 368.4 489.0 364.0C491.8 359.6 493.9 355.2 496.0 350.0C498.1 344.8 500.0 341.3 501.5 333.0C503.0 324.7 504.6 310.8 505.0 300.0C505.4 289.2 504.8 279.3 504.0 268.0C503.2 256.7 504.0 240.8 500.0 232.0C496.0 223.2 491.7 218.3 480.0 215.0C468.3 211.7 444.2 212.0 430.0 212.0C415.8 212.0 402.8 211.7 395.0 215.0C387.2 218.3 385.3 224.2 383.0 232.0C380.7 239.8 381.4 250.7 381.0 262.0Z"/></clipPath>
<clipPath id="cShirt"><path d="M406.0 389.5C409.7 390.9 414.1 399.9 418.0 403.0C421.9 406.1 427.8 409.1 432.0 410.5C436.2 411.9 441.5 412.3 446.0 412.0C450.5 411.7 457.2 410.4 462.0 408.5C466.8 406.6 473.8 402.3 478.0 399.0C482.2 395.7 485.8 387.7 490.0 386.5C494.2 385.3 500.7 389.1 506.0 391.0C511.3 392.9 520.4 397.2 525.5 399.5C530.6 401.8 536.2 403.6 540.0 406.0C543.8 408.4 548.0 412.2 551.0 415.5C554.0 418.8 557.6 423.6 560.0 428.0C562.4 432.4 564.9 439.4 567.0 444.5C569.1 449.6 572.1 456.7 574.0 462.0C575.9 467.3 578.8 476.4 579.5 480.0C580.2 483.6 579.5 484.7 579.0 486.0C578.5 487.3 579.6 487.1 576.0 488.5C572.4 489.9 561.6 493.6 555.0 495.5C548.4 497.4 536.2 500.4 532.0 501.5C527.8 502.6 527.8 500.2 527.0 503.0C526.2 505.8 526.2 513.0 526.5 520.0C526.8 527.0 528.4 542.0 529.0 550.0C529.6 558.0 530.4 567.1 530.5 573.0C530.6 578.9 530.2 585.9 529.5 589.0C528.8 592.1 527.4 592.9 526.0 594.0C524.6 595.1 525.4 595.6 520.0 596.5C514.6 597.4 501.2 599.1 490.0 600.0C478.8 600.9 458.5 602.3 445.0 602.5C431.5 602.7 410.4 602.1 400.0 601.5C389.6 600.9 380.6 599.6 376.0 598.5C371.4 597.4 370.9 595.9 369.5 594.0C368.1 592.1 367.3 592.6 367.0 586.0C366.7 579.4 367.2 559.9 367.5 550.0C367.8 540.1 368.7 527.0 369.0 520.0C369.3 513.0 370.1 505.9 369.5 503.0C368.9 500.1 368.7 502.4 365.0 501.0C361.3 499.6 351.1 496.3 345.0 494.0C338.9 491.7 327.6 487.3 324.0 485.5C320.4 483.7 321.4 483.6 321.0 482.0C320.6 480.4 320.8 478.3 321.5 475.0C322.2 471.7 324.4 464.6 326.0 460.0C327.6 455.4 330.2 449.0 332.0 444.5C333.8 440.0 336.1 433.9 338.0 430.0C339.9 426.1 342.6 421.4 345.0 418.5C347.4 415.6 351.1 412.9 354.0 411.0C356.9 409.1 360.6 407.3 364.5 405.5C368.4 403.7 375.6 400.7 380.0 399.0C384.4 397.3 389.6 395.4 393.5 394.0C397.4 392.6 402.3 388.1 406.0 389.5Z"/></clipPath>
<clipPath id="cJeans"><path d="M373.5 597.0C355.8 602.2 373.4 626.9 373.5 640.0C373.6 653.1 374.5 695.0 374.5 709.0C374.5 723.0 373.7 752.5 373.5 760.0C373.3 767.5 372.9 769.7 373.0 773.0C373.1 776.3 372.5 785.8 374.5 788.0C376.5 790.2 385.9 790.7 390.0 792.0C394.1 793.3 405.0 797.4 410.0 799.0C415.0 800.6 429.7 807.0 432.5 806.0C435.3 805.0 433.9 795.4 434.0 790.0C434.1 784.6 433.2 769.5 433.5 760.0C433.8 750.5 435.2 722.3 436.5 709.0C437.8 695.7 443.2 654.4 444.5 646.0C445.8 637.6 447.4 637.1 448.0 637.0C448.6 636.9 449.2 638.5 450.0 645.0C450.8 651.5 453.3 679.6 455.0 693.0C456.7 706.4 463.3 748.7 464.5 760.0C465.7 771.3 465.4 785.2 465.5 790.0C465.6 794.8 463.8 800.4 465.5 801.0C467.2 801.6 475.4 796.4 480.0 795.0C484.6 793.6 499.5 789.2 505.0 789.0C510.5 788.8 524.3 794.6 527.0 793.0C529.7 791.4 528.6 778.9 528.5 775.0C528.4 771.1 526.4 771.4 526.0 760.0C525.6 748.6 525.5 693.3 525.5 677.0C525.5 660.7 526.0 629.6 526.0 620.0C526.0 610.4 543.3 597.7 525.5 595.0C507.7 592.3 391.2 591.8 373.5 597.0Z"/></clipPath>
</defs><path d="M322.5 833.0C322.4 830.9 323.5 826.4 324.5 824.0C325.5 821.6 328.5 817.0 330.3 815.0C332.1 813.0 335.6 810.5 338.0 809.0C340.4 807.5 345.3 805.1 348.0 803.5C350.7 801.9 355.3 798.7 358.0 797.0C360.7 795.3 365.3 792.3 368.4 791.0C371.5 789.7 377.5 787.8 381.0 787.5C384.5 787.2 391.7 788.0 395.0 788.5C398.3 789.0 402.7 789.9 406.0 791.0C409.3 792.1 416.5 795.1 420.0 797.0C423.5 798.9 430.6 802.4 432.5 805.5C434.4 808.6 433.9 815.8 434.0 820.0C434.1 824.2 434.7 834.3 433.5 837.0C432.3 839.7 429.9 839.8 425.0 840.5C420.1 841.2 405.2 842.2 396.5 842.5C387.8 842.8 368.6 842.6 360.0 842.5C351.4 842.4 336.7 841.9 332.0 841.5C327.3 841.1 326.3 840.6 325.0 839.5C323.7 838.4 322.6 835.1 322.5 833.0Z" fill="url(#gShoe)"/><path d="M465.5 804.0C466.8 800.9 472.0 798.7 475.0 797.0C478.0 795.3 484.5 792.2 487.8 791.0C491.1 789.8 496.6 788.5 500.0 788.0C503.4 787.5 509.6 786.7 513.0 787.0C516.4 787.3 523.2 789.2 525.8 790.5C528.4 791.8 530.8 794.9 532.5 797.0C534.2 799.1 536.9 803.6 538.5 806.0C540.1 808.4 543.0 812.6 544.5 815.0C546.0 817.4 548.9 821.5 550.0 824.0C551.1 826.5 552.6 831.9 552.8 834.0C553.0 836.1 552.3 838.4 551.5 839.5C550.7 840.6 549.9 841.9 547.0 842.5C544.1 843.1 535.1 843.9 530.0 844.2C524.9 844.5 514.6 844.8 509.0 844.8C503.4 844.8 493.0 844.4 487.8 844.0C482.6 843.6 472.9 842.4 470.0 841.5C467.1 840.6 466.7 840.4 466.0 837.5C465.3 834.6 465.1 824.5 465.0 820.0C464.9 815.5 464.2 807.1 465.5 804.0Z" fill="url(#gShoe)"/><defs><clipPath id="cLS"><path d="M322.5 833.0C322.4 830.9 323.5 826.4 324.5 824.0C325.5 821.6 328.5 817.0 330.3 815.0C332.1 813.0 335.6 810.5 338.0 809.0C340.4 807.5 345.3 805.1 348.0 803.5C350.7 801.9 355.3 798.7 358.0 797.0C360.7 795.3 365.3 792.3 368.4 791.0C371.5 789.7 377.5 787.8 381.0 787.5C384.5 787.2 391.7 788.0 395.0 788.5C398.3 789.0 402.7 789.9 406.0 791.0C409.3 792.1 416.5 795.1 420.0 797.0C423.5 798.9 430.6 802.4 432.5 805.5C434.4 808.6 433.9 815.8 434.0 820.0C434.1 824.2 434.7 834.3 433.5 837.0C432.3 839.7 429.9 839.8 425.0 840.5C420.1 841.2 405.2 842.2 396.5 842.5C387.8 842.8 368.6 842.6 360.0 842.5C351.4 842.4 336.7 841.9 332.0 841.5C327.3 841.1 326.3 840.6 325.0 839.5C323.7 838.4 322.6 835.1 322.5 833.0Z"/></clipPath><clipPath id="cRS"><path d="M465.5 804.0C466.8 800.9 472.0 798.7 475.0 797.0C478.0 795.3 484.5 792.2 487.8 791.0C491.1 789.8 496.6 788.5 500.0 788.0C503.4 787.5 509.6 786.7 513.0 787.0C516.4 787.3 523.2 789.2 525.8 790.5C528.4 791.8 530.8 794.9 532.5 797.0C534.2 799.1 536.9 803.6 538.5 806.0C540.1 808.4 543.0 812.6 544.5 815.0C546.0 817.4 548.9 821.5 550.0 824.0C551.1 826.5 552.6 831.9 552.8 834.0C553.0 836.1 552.3 838.4 551.5 839.5C550.7 840.6 549.9 841.9 547.0 842.5C544.1 843.1 535.1 843.9 530.0 844.2C524.9 844.5 514.6 844.8 509.0 844.8C503.4 844.8 493.0 844.4 487.8 844.0C482.6 843.6 472.9 842.4 470.0 841.5C467.1 840.6 466.7 840.4 466.0 837.5C465.3 834.6 465.1 824.5 465.0 820.0C464.9 815.5 464.2 807.1 465.5 804.0Z"/></clipPath></defs><g clip-path="url(#cLS)"><path d="M322 812 Q350 796 374 789 L434 806 L434 822 Q400 824 380 824 Q350 822 322 830Z" fill="#cfcfcf" filter="url(#b2)" opacity="0.75"/><path d="M321 828 Q345 822 372 823.5 Q402 825 434 818.5" stroke="#8e8e8e" stroke-width="2.2" fill="none" filter="url(#b1)"/><path d="M321 832.5 Q345 826.5 372 828 Q402 829 434 823.5" stroke="#f6f6f6" stroke-width="3" fill="none" filter="url(#b1)"/><path d="M350 806 Q372 809 386 819 Q392 806 400 800 Q415 803 432 808" stroke="#a6a6a6" stroke-width="1.6" fill="none" filter="url(#b1)"/><path d="M372 791 Q385 797 400 800" stroke="#b0b0b0" stroke-width="1.4" fill="none" filter="url(#b1)"/><path d="M322 842.5 L434 842.5" stroke="#6a6a6a" stroke-width="3" fill="none" filter="url(#b1)"/><path d="M428 800 L436 800 L436 845 L428 845Z" fill="#9a9a9a" filter="url(#b2)" opacity="0.7"/></g><g clip-path="url(#cRS)"><path d="M465 806 Q490 790 520 790 L545 818 L552 834 Q520 826 490 826 L465 822Z" fill="#cfcfcf" filter="url(#b2)" opacity="0.7"/><path d="M464 824 Q476 827 488 826.5 Q520 824 553 831" stroke="#8e8e8e" stroke-width="2.2" fill="none" filter="url(#b1)"/><path d="M464 829 Q476 832 488 831.5 Q520 829 553 836" stroke="#f6f6f6" stroke-width="3" fill="none" filter="url(#b1)"/><path d="M482 800 L485 826 M488 828 Q489 812 496 803 Q515 796 541 815" stroke="#a8a8a8" stroke-width="1.6" fill="none" filter="url(#b1)"/><path d="M464 845 L553 845" stroke="#6a6a6a" stroke-width="3" fill="none" filter="url(#b1)"/><path d="M462 800 L470 800 L470 845 L462 845Z" fill="#9a9a9a" filter="url(#b2)" opacity="0.7"/></g><path d="M326 841.5 Q345 844 362 843" stroke="#1a1a1a" stroke-width="1.2" fill="none" opacity="0.8" filter="url(#b1)"/><g clip-path="url(#cJeans)"><rect x="370" y="590" width="77" height="220" fill="url(#gLegL)"/><rect x="447" y="590" width="84" height="220" fill="url(#gLegR)"/><path d="M447 596 L448 634" stroke="#042a63" stroke-width="2" filter="url(#b1)"/><path d="M373 772 Q400 778 434 782 L434 810 L373 800Z" fill="#1d7fd6"/><path d="M465 781 Q495 773 529 771 L529 800 L465 806Z" fill="#1d7fd6"/><path d="M373 773 Q400 779 434 783" stroke="#0a4a96" stroke-width="1.5" fill="none"/><path d="M465 781.5 Q495 773.5 529 771.5" stroke="#0a4a96" stroke-width="1.5" fill="none"/><path d="M412 700 Q430 720 432 780" stroke="#04306c" stroke-width="5" fill="none" filter="url(#b2)" opacity="0.8"/><path d="M470 690 Q462 730 468 780" stroke="#04306c" stroke-width="5" fill="none" filter="url(#b2)" opacity="0.8"/><path d="M395 620 Q388 700 392 770" stroke="#1868c0" stroke-width="7" fill="none" filter="url(#b4)" opacity="0.7"/><path d="M500 620 Q506 700 500 770" stroke="#1868c0" stroke-width="7" fill="none" filter="url(#b4)" opacity="0.7"/><path d="M372 596 L528 592 L528 600 L372 606Z" fill="#04285c" filter="url(#b2)" opacity="0.8"/></g><ellipse cx="459" cy="605" rx="4.0" ry="1.1" fill="#dff2ff" transform="rotate(10 459 605)"/><ellipse cx="407" cy="641" rx="2.0" ry="1.0" fill="#dff2ff" transform="rotate(50 407 641)"/><ellipse cx="497" cy="747" rx="1.1" ry="2.25" fill="#dff2ff" transform="rotate(0 497 747)"/><ellipse cx="402" cy="777" rx="1.3" ry="4.0" fill="#dff2ff" transform="rotate(0 402 777)"/><ellipse cx="498" cy="775" rx="1.5" ry="3.25" fill="#dff2ff" transform="rotate(0 498 775)"/><ellipse cx="406" cy="756" rx="5.0" ry="0.8" fill="#dff2ff" transform="rotate(-20 406 756)"/><path d="M327.0 486.0C322.6 489.9 322.6 501.8 321.0 510.0C319.4 518.2 317.6 531.2 316.5 541.0C315.4 550.8 314.2 565.9 313.5 575.0C312.8 584.1 312.5 594.5 312.0 602.0C311.5 609.5 310.2 619.3 310.0 625.0C309.8 630.7 309.9 636.0 310.5 640.0C311.1 644.0 312.0 648.5 314.0 652.0C316.0 655.5 321.0 660.3 324.0 663.0C327.0 665.7 331.4 668.5 334.0 670.0C336.6 671.5 339.1 672.8 341.0 673.0C342.9 673.2 345.7 672.4 347.0 671.5C348.3 670.6 349.5 668.9 349.5 667.0C349.5 665.1 348.3 661.9 347.0 659.0C345.7 656.1 342.3 651.1 341.0 648.0C339.7 644.9 338.6 640.4 338.5 638.0C338.4 635.6 339.0 631.7 340.0 632.0C341.0 632.3 343.6 637.6 345.0 640.0C346.4 642.4 347.6 646.2 349.0 648.0C350.4 649.8 352.6 651.8 354.0 652.0C355.4 652.2 357.2 651.0 358.0 649.5C358.8 648.0 359.4 644.9 359.5 642.0C359.6 639.1 359.0 634.5 358.5 630.0C358.0 625.5 356.5 616.5 356.0 612.0C355.5 607.5 355.4 603.6 355.0 600.0C354.6 596.4 353.1 592.5 353.5 588.0C353.9 583.5 356.0 577.0 357.5 570.0C359.0 563.0 361.9 549.2 363.5 541.0C365.1 532.8 367.0 522.4 368.0 515.0C369.0 507.6 372.7 496.6 370.0 492.0C367.3 487.4 356.4 484.9 350.0 484.0C343.6 483.1 331.4 482.1 327.0 486.0Z" fill="url(#gSkinL)"/><path d="M533.5 498.0C530.8 502.2 536.8 513.5 538.0 520.0C539.2 526.5 540.8 534.2 541.8 541.0C542.8 547.8 544.5 559.5 545.0 565.0C545.5 570.5 546.0 574.2 545.4 578.0C544.8 581.8 542.3 586.1 541.0 590.0C539.7 593.9 537.8 600.1 536.5 604.0C535.2 607.9 533.5 612.1 532.5 616.0C531.5 619.9 530.3 626.2 530.0 630.0C529.7 633.8 529.8 638.5 530.5 641.0C531.2 643.5 533.1 646.3 534.5 647.0C535.9 647.7 538.2 646.9 539.5 645.5C540.8 644.1 542.1 640.3 543.0 638.0C543.9 635.7 544.7 630.8 545.5 630.0C546.3 629.2 548.1 631.0 548.5 633.0C548.9 635.0 548.7 639.7 548.0 643.0C547.3 646.3 544.8 652.1 544.0 655.0C543.2 657.9 542.7 660.1 543.0 662.0C543.3 663.9 544.8 666.6 546.0 667.5C547.2 668.4 549.0 668.7 551.0 668.0C553.0 667.3 556.5 665.0 559.0 663.0C561.5 661.0 565.6 657.7 568.0 655.0C570.4 652.3 573.2 648.5 575.0 645.0C576.8 641.5 578.9 636.4 580.0 632.0C581.1 627.6 582.3 620.8 582.5 616.0C582.7 611.2 581.3 604.6 581.5 600.0C581.7 595.4 583.4 591.0 584.0 585.0C584.6 579.0 585.4 566.8 585.5 560.0C585.6 553.2 585.4 546.8 585.0 540.0C584.6 533.2 583.8 523.0 583.0 515.0C582.2 507.1 583.5 490.4 579.5 487.0C575.5 483.6 562.9 490.4 556.0 492.0C549.1 493.6 536.2 493.8 533.5 498.0Z" fill="url(#gSkinR)"/><path d="M336 588 Q336.5 600 339.5 613" stroke="#fff2e0" stroke-width="2.2" fill="none" stroke-linecap="round"/><path d="M336.5 529.5 L336.3 533" stroke="#ffe0c0" stroke-width="1.3" stroke-linecap="round"/><path d="M352 643 L353.5 647" stroke="#ffe8d0" stroke-width="1.2" stroke-linecap="round"/><path d="M556.5 608 Q556.5 614 559 620" stroke="#fff2e0" stroke-width="2" fill="none" stroke-linecap="round"/><path d="M563.5 518 Q562.5 524 563 529" stroke="#ffe6cc" stroke-width="1.8" fill="none" stroke-linecap="round"/><path d="M563 573 L563.5 579" stroke="#ffe0c0" stroke-width="1.8" stroke-linecap="round"/><path d="M535 640 L537 643" stroke="#ffe8d0" stroke-width="1.2" stroke-linecap="round"/><path d="M326 650 Q332 662 341 669" stroke="#8c480f" stroke-width="1.6" fill="none" filter="url(#b1)" opacity="0.7"/><path d="M318 640 Q322 652 330 660" stroke="#8c480f" stroke-width="1.4" fill="none" filter="url(#b1)" opacity="0.5"/><path d="M558.5 648 Q556 658 551 665.5" stroke="#8c480f" stroke-width="1.6" fill="none" filter="url(#b1)" opacity="0.7"/><path d="M567 644 Q565 652 560.5 658.5" stroke="#8c480f" stroke-width="1.4" fill="none" filter="url(#b1)" opacity="0.55"/><path d="M546.5 584.3 Q563 584 581 592.2" stroke="#0a0a0a" stroke-width="9.5" fill="none" stroke-linecap="round"/><path d="M546 582.5 Q562 581.5 581 589.5" stroke="#343434" stroke-width="1" fill="none" stroke-dasharray="2 3"/><path d="M406.0 389.5C409.7 390.9 414.1 399.9 418.0 403.0C421.9 406.1 427.8 409.1 432.0 410.5C436.2 411.9 441.5 412.3 446.0 412.0C450.5 411.7 457.2 410.4 462.0 408.5C466.8 406.6 473.8 402.3 478.0 399.0C482.2 395.7 485.8 387.7 490.0 386.5C494.2 385.3 500.7 389.1 506.0 391.0C511.3 392.9 520.4 397.2 525.5 399.5C530.6 401.8 536.2 403.6 540.0 406.0C543.8 408.4 548.0 412.2 551.0 415.5C554.0 418.8 557.6 423.6 560.0 428.0C562.4 432.4 564.9 439.4 567.0 444.5C569.1 449.6 572.1 456.7 574.0 462.0C575.9 467.3 578.8 476.4 579.5 480.0C580.2 483.6 579.5 484.7 579.0 486.0C578.5 487.3 579.6 487.1 576.0 488.5C572.4 489.9 561.6 493.6 555.0 495.5C548.4 497.4 536.2 500.4 532.0 501.5C527.8 502.6 527.8 500.2 527.0 503.0C526.2 505.8 526.2 513.0 526.5 520.0C526.8 527.0 528.4 542.0 529.0 550.0C529.6 558.0 530.4 567.1 530.5 573.0C530.6 578.9 530.2 585.9 529.5 589.0C528.8 592.1 527.4 592.9 526.0 594.0C524.6 595.1 525.4 595.6 520.0 596.5C514.6 597.4 501.2 599.1 490.0 600.0C478.8 600.9 458.5 602.3 445.0 602.5C431.5 602.7 410.4 602.1 400.0 601.5C389.6 600.9 380.6 599.6 376.0 598.5C371.4 597.4 370.9 595.9 369.5 594.0C368.1 592.1 367.3 592.6 367.0 586.0C366.7 579.4 367.2 559.9 367.5 550.0C367.8 540.1 368.7 527.0 369.0 520.0C369.3 513.0 370.1 505.9 369.5 503.0C368.9 500.1 368.7 502.4 365.0 501.0C361.3 499.6 351.1 496.3 345.0 494.0C338.9 491.7 327.6 487.3 324.0 485.5C320.4 483.7 321.4 483.6 321.0 482.0C320.6 480.4 320.8 478.3 321.5 475.0C322.2 471.7 324.4 464.6 326.0 460.0C327.6 455.4 330.2 449.0 332.0 444.5C333.8 440.0 336.1 433.9 338.0 430.0C339.9 426.1 342.6 421.4 345.0 418.5C347.4 415.6 351.1 412.9 354.0 411.0C356.9 409.1 360.6 407.3 364.5 405.5C368.4 403.7 375.6 400.7 380.0 399.0C384.4 397.3 389.6 395.4 393.5 394.0C397.4 392.6 402.3 388.1 406.0 389.5Z" fill="url(#gShirt)"/><g clip-path="url(#cShirt)"><rect x="320" y="385" width="262" height="220" fill="url(#gShirtV)"/><path d="M370 455 Q364 480 369 505 L366 600" stroke="#a2a2a2" stroke-width="6" fill="none" filter="url(#b4)" opacity="0.75"/><path d="M527 455 Q533 480 527 505 L531 600" stroke="#a2a2a2" stroke-width="6" fill="none" filter="url(#b4)" opacity="0.75"/><path d="M321 484 L369 503 L369 498 L323 478Z" fill="#8c8c8c" filter="url(#b1)" opacity="0.6"/><path d="M580 486 L527 503 L527 498 L579 480Z" fill="#8c8c8c" filter="url(#b1)" opacity="0.6"/><path d="M320 440 Q322 470 321 486" stroke="#9a9a9a" stroke-width="6" fill="none" filter="url(#b2)" opacity="0.8"/><path d="M582 440 Q580 470 581 486" stroke="#9a9a9a" stroke-width="6" fill="none" filter="url(#b2)" opacity="0.8"/><path d="M404 391 Q420 412 446 415 Q472 412 491 388" stroke="#f2f2f2" stroke-width="4" fill="none" filter="url(#b1)"/><ellipse cx="447" cy="485" rx="55" ry="65" fill="#e8e8e8" filter="url(#b7)" opacity="0.6"/><path d="M368 560 Q445 582 530 556 L530 605 L368 605Z" fill="#b0b0b0" filter="url(#b7)" opacity="0.55"/></g><ellipse cx="459" cy="470" rx="8.5" ry="3.6" fill="#fff" transform="rotate(14 459 470)"/><ellipse cx="462.5" cy="563.5" rx="6.5" ry="1.6" fill="#fff" transform="rotate(-12 462.5 563.5)"/><ellipse cx="455" cy="422.5" rx="4" ry="1.3" fill="#fff"/><defs><linearGradient id="gNeck" x1="0" x2="0" y1="0" y2="1"><stop offset="0" stop-color="#6a360c"/><stop offset="0.6" stop-color="#98511a"/><stop offset="1" stop-color="#c4712a"/></linearGradient></defs><path d="M411.0 368.0C400.9 370.0 408.8 379.7 408.5 383.0C408.2 386.3 407.7 390.2 409.0 393.0C410.3 395.8 414.9 401.6 418.0 404.0C421.1 406.4 428.3 409.9 432.0 411.0C435.7 412.1 442.0 412.8 446.0 412.5C450.0 412.2 457.7 410.7 462.0 409.0C466.3 407.3 474.9 402.7 478.0 400.0C481.1 397.3 484.6 393.3 485.5 389.0C486.4 384.7 494.4 370.8 484.5 368.0C474.6 365.2 421.1 366.0 411.0 368.0Z" fill="url(#gNeck)"/><path d="M407 383 Q440 402 487 380 L487 372 L407 372Z" fill="#8a4a12" filter="url(#b2)" opacity="0.9"/><path d="M382 292 Q372 286 368 297 Q365 312 370 328 Q375 342 383 340Z" fill="#d27b2c"/><path d="M377 296 Q371 300 373 318 Q376 333 381 334" stroke="#a85c18" stroke-width="2.5" fill="none" filter="url(#b1)"/><path d="M503 292 Q516 284 525 292 Q531 302 527 320 Q522 340 510 345 Q504 346 503 338Z" fill="#d9822f"/><path d="M508 298 Q519 292 522 304 Q523 322 512 338" stroke="#a85c18" stroke-width="3" fill="none" filter="url(#b2)"/><path d="M381.0 262.0C380.6 273.3 380.5 287.8 380.5 300.0C380.5 312.2 380.3 326.3 381.0 335.0C381.7 343.7 382.8 346.8 384.5 352.0C386.2 357.2 388.5 362.0 391.0 366.0C393.5 370.0 396.2 372.9 399.5 376.0C402.8 379.1 406.8 382.1 411.0 384.5C415.2 386.9 420.3 389.1 425.0 390.5C429.7 391.9 434.2 392.9 439.0 393.0C443.8 393.1 449.2 392.2 454.0 391.0C458.8 389.8 463.8 387.9 468.0 385.5C472.2 383.1 476.0 380.1 479.5 376.5C483.0 372.9 486.2 368.4 489.0 364.0C491.8 359.6 493.9 355.2 496.0 350.0C498.1 344.8 500.0 341.3 501.5 333.0C503.0 324.7 504.6 310.8 505.0 300.0C505.4 289.2 504.8 279.3 504.0 268.0C503.2 256.7 504.0 240.8 500.0 232.0C496.0 223.2 491.7 218.3 480.0 215.0C468.3 211.7 444.2 212.0 430.0 212.0C415.8 212.0 402.8 211.7 395.0 215.0C387.2 218.3 385.3 224.2 383.0 232.0C380.7 239.8 381.4 250.7 381.0 262.0Z" fill="url(#gFace)"/><g clip-path="url(#cFace)"><ellipse cx="408" cy="297" rx="19" ry="13" fill="#b86a22" filter="url(#b4)" opacity="0.55"/><ellipse cx="464" cy="298" rx="20" ry="13" fill="#b86a22" filter="url(#b4)" opacity="0.55"/><ellipse cx="402" cy="322" rx="14" ry="10" fill="#ee9c4e" filter="url(#b4)" opacity="0.6"/><ellipse cx="472" cy="322" rx="14" ry="10" fill="#ee9c4e" filter="url(#b4)" opacity="0.6"/><path d="M374 316 L381.5 327 Q390 337 396.7 346 Q402 357 408.3 366 Q415 372 422.8 373.5 L436 372.5 Q455 373 467.7 369 Q478 361 485 352 Q493 342 498.5 329 L503 296 L514 296 L512 402 L374 402Z" fill="#4a4948" filter="url(#b4)"/><path d="M380 340 Q384 362 398 378 Q416 392 439 395 Q462 392 482 378 Q494 366 500 345 L508 345 L508 402 L376 402Z" fill="#3a3938" filter="url(#b4)" opacity="0.8"/><ellipse cx="438" cy="382" rx="24" ry="8" fill="#626160" filter="url(#b4)" opacity="0.9"/><path d="M395.5 337 Q410 339.5 420 343.5 Q434 348 447 343.5 Q460 339 476.5 336.5 L474 347 Q456 353.5 436 357 Q414 353.5 398.5 347.5Z" fill="#5c5148" filter="url(#b2)" opacity="0.97"/><path d="M409 352.5 Q436 365 465 352 Q456 364.5 436 366.5 Q420 365 409 352.5Z" fill="#df8738" filter="url(#b1)"/><path d="M404 349 Q436 362.5 470 348.5" stroke="#6b4a30" stroke-width="1.6" fill="none" filter="url(#b1)" opacity="0.8"/><path d="M418 361.5 Q434 366.5 450 361" stroke="#4e4038" stroke-width="1.6" fill="none" filter="url(#b1)" opacity="0.85"/><path d="M497 232 Q503 260 503 300 L504 345 L520 345 L520 225Z" fill="#3a2a22" filter="url(#b4)" opacity="0.85"/><path d="M380 232 Q381 270 381 330 L372 330 L372 232Z" fill="#2a1c14" filter="url(#b2)" opacity="0.8"/><path d="M426 290 Q424 312 418 326 L450 326 Q444 312 442 290Z" fill="#e8923f" filter="url(#b2)" opacity="0.8"/><ellipse cx="434" cy="332.5" rx="17.6" ry="12" fill="#e48d3c"/><path d="M416.5 334 Q418 343 427 345 Q434 347.5 441 345 Q450 343 451.5 334" stroke="#9c5416" stroke-width="3.2" fill="none" filter="url(#b2)"/><path d="M424 300 Q420 318 416.5 330" stroke="#c06e24" stroke-width="3" fill="none" filter="url(#b2)"/><path d="M444 300 Q448 318 451.5 330" stroke="#c06e24" stroke-width="3" fill="none" filter="url(#b2)"/><ellipse cx="433" cy="329" rx="8" ry="6" fill="#f0a055" filter="url(#b2)" opacity="0.8"/></g><ellipse cx="408" cy="297" rx="15.5" ry="10.3" fill="#8e4e16"/><ellipse cx="408" cy="297.4" rx="14.3" ry="8.8" fill="#e6e6ea"/><circle cx="410" cy="296.2" r="8.5" fill="#3c2a2a"/><circle cx="410" cy="296.2" r="5" fill="#0e0909"/><circle cx="412" cy="294.4" r="1.5" fill="#e8f4f4"/><path d="M393 296 Q408 283.5 423.5 295" stroke="#6a3810" stroke-width="2.6" fill="none"/><ellipse cx="464.5" cy="298.4" rx="16.2" ry="10.2" fill="#8e4e16"/><ellipse cx="464.6" cy="298.9" rx="15" ry="8.6" fill="#e6e6ea"/><circle cx="460.7" cy="296.3" r="8.5" fill="#3c2a2a"/><circle cx="460.7" cy="296.3" r="5" fill="#0e0909"/><circle cx="462.8" cy="293.8" r="1.2" fill="#fff"/><path d="M448.5 297 Q462 284 481 296.5" stroke="#6a3810" stroke-width="2.6" fill="none"/><path d="M454 306.8 Q462 308.8 470 306.6" stroke="#fff" stroke-width="1.2" fill="none"/><path d="M388.3 283.5 Q387.5 273.5 398 270.5 Q410 267.5 419 269.5 Q425 271.5 422.5 278.5 Q419.5 283 408 281.5 Q397 282 392 286.5 Q388.8 287.5 388.3 283.5Z" fill="#170b08"/><path d="M445 275 Q446 270 456 270 Q472 270.5 484 278 Q489.5 283 486.5 287 Q483 288 478 283.5 Q466 279 453 280.5 Q444.5 280 445 275Z" fill="#170b08"/><path d="M452.5 271.5 L458 271.8" stroke="#f4e0d0" stroke-width="1" stroke-linecap="round"/><path d="M446.3 246 Q444.5 254 442.5 259.5" stroke="#fff6ea" stroke-width="1.6" fill="none" stroke-linecap="round"/><ellipse cx="441.8" cy="262.3" rx="3.3" ry="3.8" fill="#fff6ea"/><path d="M434.5 292 L434.5 296 M434 304 L434 307" stroke="#ffe8d0" stroke-width="1.5" stroke-linecap="round"/><ellipse cx="433.5" cy="331.5" rx="1.8" ry="1.3" fill="#fff"/><path d="M436 369 L436 374" stroke="#ddd" stroke-width="1.1" stroke-linecap="round"/><path d="M448.0 180.6C444.8 180.6 439.1 181.2 436.0 181.8C432.9 182.4 427.6 184.5 424.7 185.0C421.8 185.5 416.7 185.0 414.0 185.2C411.3 185.4 406.8 185.6 404.4 186.4C402.0 187.2 397.9 189.4 396.0 191.0C394.1 192.6 391.8 196.3 390.3 198.6C388.8 200.9 386.2 205.3 385.0 208.0C383.8 210.7 381.9 216.2 381.0 218.9C380.1 221.6 378.7 225.5 378.2 228.0C377.7 230.5 377.0 233.5 377.0 238.0C377.0 242.5 377.8 255.5 378.3 262.0C378.8 268.5 379.9 287.0 380.5 287.0C381.1 287.0 382.0 267.6 382.5 262.0C383.0 256.4 383.4 248.1 384.0 245.0C384.6 241.9 386.1 240.6 387.0 239.0C387.9 237.4 389.7 234.2 391.0 233.0C392.3 231.8 393.1 230.2 396.6 229.8C400.1 229.4 411.3 229.5 416.9 229.8C422.5 230.1 433.3 232.3 438.8 232.2C444.2 232.1 451.7 229.4 457.5 229.0C463.3 228.6 478.2 228.8 482.5 229.0C486.8 229.2 488.4 229.9 490.0 230.8C491.6 231.7 493.3 234.0 494.5 236.0C495.7 238.0 498.1 243.3 499.0 246.0C499.9 248.7 500.8 253.7 501.5 256.0C502.2 258.3 503.0 261.8 504.0 263.0C505.0 264.2 507.7 265.4 509.0 265.0C510.3 264.6 513.0 262.3 514.0 260.0C515.0 257.7 516.3 250.9 516.5 248.0C516.7 245.1 515.6 240.2 515.2 238.0C514.8 235.8 514.4 233.4 513.8 231.4C513.1 229.4 511.5 224.9 510.5 223.0C509.5 221.1 507.5 218.8 506.0 217.3C504.5 215.8 501.0 213.2 499.5 212.0C498.0 210.8 496.0 209.2 495.0 208.0C494.0 206.8 492.8 204.3 492.0 203.0C491.2 201.7 490.2 200.3 488.8 198.6C487.3 196.9 483.3 192.4 481.0 190.5C478.7 188.6 474.4 185.7 471.6 184.5C468.8 183.3 463.1 182.0 460.0 181.5C456.9 181.0 451.2 180.6 448.0 180.6Z" fill="url(#gHair)"/><defs><linearGradient id="gSide" x1="0" x2="0" y1="0" y2="1"><stop offset="0" stop-color="#07090c"/><stop offset="0.35" stop-color="#1a1311"/><stop offset="0.75" stop-color="#46291a"/><stop offset="1" stop-color="#7a4822"/></linearGradient></defs><path d="M499 244 L516.8 244 Q517 262 514.8 274 Q512.5 286 509 293.5 L503.5 294 Q503.8 270 499 244Z" fill="url(#gSide)"/><path d="M404 200 Q425 190 450 191 Q472 193 486 205" stroke="#172230" stroke-width="7" fill="none" filter="url(#b2)" opacity="0.9"/><path d="M408.0 194 Q411 206 412.0 220" stroke="#26384a" stroke-width="1.5" fill="none" opacity="0.7" filter="url(#b1)"/><path d="M415.5 194 Q418 206 419.2 220" stroke="#26384a" stroke-width="1.5" fill="none" opacity="0.7" filter="url(#b1)"/><path d="M423.0 194 Q425 206 426.4 220" stroke="#26384a" stroke-width="1.5" fill="none" opacity="0.7" filter="url(#b1)"/><path d="M430.5 194 Q432 206 433.6 220" stroke="#26384a" stroke-width="1.5" fill="none" opacity="0.7" filter="url(#b1)"/><path d="M437.5 194 Q438.5 206 440.3 220" stroke="#26384a" stroke-width="1.5" fill="none" opacity="0.7" filter="url(#b1)"/><path d="M444.5 194 Q445 206 447.0 220" stroke="#26384a" stroke-width="1.5" fill="none" opacity="0.7" filter="url(#b1)"/><path d="M451.5 194 Q451.5 206 453.7 220" stroke="#26384a" stroke-width="1.5" fill="none" opacity="0.7" filter="url(#b1)"/><path d="M458.5 194 Q458 206 460.4 220" stroke="#26384a" stroke-width="1.5" fill="none" opacity="0.7" filter="url(#b1)"/><path d="M466.0 194 Q465 206 467.6 220" stroke="#26384a" stroke-width="1.5" fill="none" opacity="0.7" filter="url(#b1)"/><path d="M473.5 194 Q472 206 474.8 220" stroke="#26384a" stroke-width="1.5" fill="none" opacity="0.7" filter="url(#b1)"/><ellipse cx="415.3" cy="208.7" rx="0.75" ry="1.7" fill="#c4d8ea" opacity="0.85"/><ellipse cx="427" cy="209.5" rx="0.75" ry="1.7" fill="#c4d8ea" opacity="0.85"/><ellipse cx="436.4" cy="205.6" rx="0.75" ry="1.7" fill="#c4d8ea" opacity="0.85"/><ellipse cx="442.2" cy="206.4" rx="0.75" ry="1.7" fill="#c4d8ea" opacity="0.85"/><ellipse cx="446.9" cy="206.4" rx="0.75" ry="1.7" fill="#c4d8ea" opacity="0.85"/><ellipse cx="459" cy="205.6" rx="0.75" ry="1.7" fill="#c4d8ea" opacity="0.85"/><path d="M395 200 L400 197.5" stroke="#5a4030" stroke-width="1" opacity="0.6"/></svg>
<svg style="left:140px;top:174px" width="20" height="42" viewBox="0 0 20 42"><g fill="#000"><ellipse cx="9.8" cy="6.3" rx="4.7" ry="5.6"/><rect x="7.3" y="9" width="5" height="5" /><path d="M4.2 14 Q10 12.5 15.6 14 Q18.5 16 18.2 24 L18 29.5 Q17 31.5 15.7 29.5 L15.5 24 L15 29 L14.5 38 L16.5 39.5 L16.3 41 L11.2 41 L11 30 L9 30 L8.8 41 L3.2 41 L3 39.7 L5.2 38 L4.7 29 L4.5 24 L4.2 29.5 Q2.8 31.5 1.8 29.5 L1.5 24 Q1.5 16 4.2 14Z"/></g></svg>
<svg style="left:740px;top:165px" width="50" height="50" viewBox="740 165 50 50"><path d="M747 177.3 L772.8 171.9 L772.8 183.1Z" fill="#f00"/><circle cx="780.3" cy="177.3" r="5.8" fill="#00f"/><path d="M775.2 186.2 L786.1 186.2 L780.6 211.6Z" fill="#0f0"/></svg>
<svg style="left:716px;top:197px" width="44" height="48" viewBox="716 197 44 48"><path d="M738 198 L744 200 L750.5 205 L754.5 213 L756 222 L758.4 224.5 L756.5 226.5 L753.5 228 L752.5 235 L749 240.5 L743 243.8 L735 244 L729 241 L724.5 235.5 L723 228 L719.5 226 L717.8 224.5 L720.5 221 L722.5 211 L727 204 L733 199.5Z" fill="#7a7a7a"/><path d="M731 200.5 L746 200.5 L747 213 L747 229 L731 229 L731 213Z" fill="#a9a9a9"/><path d="M731 213 L747 213 L747 229 L731 229Z" fill="#989898"/><path d="M723 228 L731 229 L747 229 L753.5 228 L752.5 235 L749 240.5 L743 243.8 L735 244 L729 241 L724.5 235.5Z" fill="#3f3f3f"/><path d="M731 229 L747 229 L745 243 L734 243.5Z" fill="#4d4d4d"/><path d="M717.8 224.5 L722.5 211 L731 213 L731 229 L723 228Z" fill="#868686"/><path d="M758.4 224.5 L754.5 213 L747 213 L747 229 L753.5 228Z" fill="#6c6c6c"/></svg>
<svg style="left:88px;top:685px" width="9" height="9" viewBox="0 0 9 9"><circle cx="4.4" cy="4" r="2" fill="none" stroke="#e8707a" stroke-width="0.9"/></svg>
<div style="left:13px;top:788.5px;width:164px;height:57px;background:rgba(76,76,76,0.71);border-radius:5px;"></div>
<div class="t" style="left:22px;top:795.7px;height:14px;line-height:14px;color:#f0f0f0;font-size:10.5px;letter-spacing:0.05px">Séparateur</div>
<div class="t" style="left:22px;top:811.0px;height:14px;line-height:14px;color:#f0f0f0;font-size:10.5px;letter-spacing:0.05px">Cliquez pour rétablir la position</div>
<div class="t" style="left:22px;top:826.3000000000001px;height:14px;line-height:14px;color:#f0f0f0;font-size:10.5px;letter-spacing:0.05px">précédente</div>
<div style="left:814.5px;top:139px;width:29.5px;height:27.5px;background:#3a3a38;border-radius:2px;"></div>
<div class="t" style="left:811.5px;top:155.0px;width:35.5px;text-align:center;height:8px;line-height:8px;font-size:6.5px;letter-spacing:-0.3px;color:#d6d6d6">BPR</div>
<svg style="left:817px;top:141px" width="25" height="22" viewBox="0 0 25 22"><defs><radialGradient id="gb" cx="0.35" cy="0.3" r="0.75"><stop offset="0" stop-color="#a4a4a4"/><stop offset="0.6" stop-color="#666"/><stop offset="1" stop-color="#404040"/></radialGradient></defs><circle cx="16" cy="11" r="9.5" fill="#4e4e4e"/><circle cx="10.5" cy="9.5" r="9" fill="url(#gb)"/></svg>
<div class="t" style="left:812px;top:156.5px;width:35px;text-align:center;height:8px;line-height:8px;font-size:6px;font-weight:bold;letter-spacing:-0.2px;color:#c4c4c4">BPR</div>
<div class="t" style="left:817px;top:169.0px;height:12px;line-height:12px;color:#e0e0e0;font-size:9px">Spix 3</div>
<div style="left:815px;top:181px;width:30px;height:1px;background:linear-gradient(90deg,#666 0,#666 80%,rgba(90,90,90,0.2) 100%)"></div>
<div style="left:823.5px;top:179.5px;width:8.5px;height:4px;background:#f7931e;border-radius:2px"></div>
<div style="left:814.5px;top:187.5px;width:29.5px;height:27px;background:#333331;border-radius:2px;"></div>
<div class="t" style="left:811.5px;top:203.0px;width:35.5px;text-align:center;height:8px;line-height:8px;font-size:6.5px;letter-spacing:-0.3px;color:#d6d6d6">Déplac</div>
<svg style="left:816.5px;top:190px" width="26" height="16" viewBox="0 0 26 16"><rect x="13" y="1.5" width="10.5" height="9.5" fill="#9c9c9c"/><rect x="14" y="2.5" width="3.6" height="3.2" fill="#e4e4e4"/><rect x="18.8" y="2.5" width="3.6" height="3.2" fill="#d0d0d0"/><rect x="18.8" y="6.8" width="3.6" height="3.2" fill="#e4e4e4"/><rect x="14" y="6.8" width="3.6" height="3.2" fill="#7c7c7c"/><path d="M3.5 6 L5 3 L6 6 L6.8 1.8 L8 6 L9 1.5 L10 6 L11 3 L11.8 7 L13 6.5 L11.5 12 Q8 14 5.5 12Z" fill="#f0f0f0"/></svg>
<div style="left:814.5px;top:219.5px;width:29.5px;height:27px;background:#333331;border-radius:2px;"></div>
<div class="t" style="left:811.5px;top:235.0px;width:35.5px;text-align:center;height:8px;line-height:8px;font-size:6.5px;letter-spacing:-0.3px;color:#d6d6d6">Zoom</div>
<svg style="left:816.5px;top:222px" width="26" height="16" viewBox="0 0 26 16"><rect x="13" y="1.5" width="10.5" height="9.5" fill="#9c9c9c"/><rect x="14" y="2.5" width="3.6" height="3.2" fill="#e4e4e4"/><rect x="18.8" y="2.5" width="3.6" height="3.2" fill="#d0d0d0"/><rect x="18.8" y="6.8" width="3.6" height="3.2" fill="#e4e4e4"/><rect x="14" y="6.8" width="3.6" height="3.2" fill="#7c7c7c"/><circle cx="10" cy="5.5" r="4" fill="#6a6a6a" stroke="#eaeaea" stroke-width="1.5"/><path d="M7 8.5 L1.8 13.5" stroke="#eaeaea" stroke-width="2" stroke-linecap="round"/></svg>
<div style="left:814.5px;top:251.5px;width:29.5px;height:27px;background:#333331;border-radius:2px;"></div>
<div class="t" style="left:811.5px;top:267.0px;width:35.5px;text-align:center;height:8px;line-height:8px;font-size:6.5px;letter-spacing:-0.3px;color:#d6d6d6">100%</div>
<svg style="left:816.5px;top:254px" width="26" height="16" viewBox="0 0 26 16"><rect x="13" y="1.5" width="10.5" height="9.5" fill="#9c9c9c"/><rect x="14" y="2.5" width="3.6" height="3.2" fill="#e4e4e4"/><rect x="18.8" y="2.5" width="3.6" height="3.2" fill="#d0d0d0"/><rect x="18.8" y="6.8" width="3.6" height="3.2" fill="#e4e4e4"/><rect x="14" y="6.8" width="3.6" height="3.2" fill="#7c7c7c"/><circle cx="10" cy="5.5" r="4" fill="#6a6a6a" stroke="#eaeaea" stroke-width="1.5"/><path d="M7 8.5 L1.8 13.5" stroke="#eaeaea" stroke-width="2" stroke-linecap="round"/></svg>
<div style="left:814.5px;top:284px;width:29.5px;height:27px;background:#333331;border-radius:2px;"></div>
<div class="t" style="left:811.5px;top:299.5px;width:35.5px;text-align:center;height:8px;line-height:8px;font-size:6.5px;letter-spacing:-0.3px;color:#d6d6d6">AC50%</div>
<svg style="left:816.5px;top:286.5px" width="26" height="16" viewBox="0 0 26 16"><rect x="13" y="1.5" width="10.5" height="9.5" fill="#9c9c9c"/><rect x="14" y="2.5" width="3.6" height="3.2" fill="#e4e4e4"/><rect x="18.8" y="2.5" width="3.6" height="3.2" fill="#d0d0d0"/><rect x="18.8" y="6.8" width="3.6" height="3.2" fill="#e4e4e4"/><rect x="14" y="6.8" width="3.6" height="3.2" fill="#7c7c7c"/><circle cx="10" cy="5.5" r="4" fill="#6a6a6a" stroke="#eaeaea" stroke-width="1.5"/><path d="M7 8.5 L1.8 13.5" stroke="#eaeaea" stroke-width="2" stroke-linecap="round"/></svg>
<div style="left:814.5px;top:313.5px;width:29.5px;height:26px;background:#2c2c2b;border-radius:2px;"></div>
<div class="t" style="left:811.5px;top:330.0px;width:35.5px;text-align:center;height:8px;line-height:8px;font-size:6.5px;letter-spacing:-0.3px;color:#d6d6d6">Persp</div>
<div class="t" style="left:812px;top:314px;width:35px;text-align:center;height:7px;line-height:7px;font-size:5.8px;font-weight:bold;letter-spacing:-0.1px;color:#d6d6d6">Dynamic</div>
<svg style="left:820px;top:321.5px" width="19" height="8" viewBox="0 0 21 10" preserveAspectRatio="none"><g stroke="#e0e0e0" stroke-width="1" fill="none"><path d="M2.5 0.5H18.5 M1.5 3.5H19.5 M0.5 7H20.5 M0 9.5H21 M6 0.5L4 9.5 M10.5 0.5V9.5 M15 0.5L17 9.5"/></g></svg>
<svg style="left:822px;top:345px" width="14" height="6" viewBox="0 0 14 6"><path d="M5 1.2H9L7 4.8Z" fill="#c8c8c8"/><rect x="0" y="2" width="3" height="2" fill="#444"/><rect x="11" y="2" width="3" height="2" fill="#444"/></svg>
<div style="left:814.5px;top:353px;width:29.5px;height:20px;background:#2c2c2b;border-radius:2px;"></div>
<div class="t" style="left:811.5px;top:363.5px;width:35.5px;text-align:center;height:8px;line-height:8px;font-size:6.5px;letter-spacing:-0.3px;color:#d6d6d6">Grille</div>
<svg style="left:819px;top:355px" width="21" height="9" viewBox="0 0 21 9"><path d="M0 7.5H21" stroke="#e0e0e0" stroke-width="1.4"/><path d="M10.5 0V5" stroke="#e0e0e0" stroke-width="1.3"/><path d="M8 3.5H13L10.5 6.5Z" fill="#e0e0e0"/></svg>
<div style="left:814.5px;top:378px;width:29.5px;height:26.5px;background:#2c2c2b;border-radius:2px;"></div>
<div class="t" style="left:811.5px;top:395.0px;width:35.5px;text-align:center;height:8px;line-height:8px;font-size:6.5px;letter-spacing:-0.3px;color:#d6d6d6">Sym.Lo</div>
<div class="t" style="left:812px;top:378.5px;width:35px;text-align:center;height:7px;line-height:7px;font-size:5.8px;font-weight:bold;letter-spacing:-0.1px;color:#d6d6d6">Dynamic</div>
<svg style="left:820px;top:387.5px" width="19" height="7.5" viewBox="0 0 21 9" preserveAspectRatio="none"><path d="M0 8H21" stroke="#e0e0e0" stroke-width="1"/><path d="M10.5 0.5V7" stroke="#e0e0e0" stroke-width="1.2"/><path d="M1 4L4.5 1.8V6.2Z M8.5 4L5 1.8V6.2Z M12.5 4L16 1.8V6.2Z M20 4L16.5 1.8V6.2Z" fill="#e0e0e0"/></svg>
<div style="left:814.5px;top:408px;width:29.5px;height:29px;background:#2c2c2b;border-radius:2px;"></div>
<svg style="left:819px;top:412px" width="22" height="22" viewBox="0 0 22 22"><circle cx="6.5" cy="13" r="4" fill="#8a8a8a"/><rect x="4" y="15" width="13" height="4" fill="#6a6a6a"/><path d="M11.5 8V5.5Q11.5 2 14.5 2Q17.5 2 17.5 5.5V8" stroke="#e6e6e6" stroke-width="1.6" fill="none"/><rect x="10" y="7.5" width="9" height="8" rx="1" fill="#e6e6e6"/><rect x="13.8" y="10" width="1.4" height="3" fill="#444"/></svg>
<div style="left:814.5px;top:443.3px;width:29.5px;height:13px;background:#f7931e;border-radius:2px;"></div>
<svg style="left:820px;top:444.5px" width="20" height="11" viewBox="0 0 20 11"><path d="M7.5 4.5A3 3 0 1 0 4.5 7.5" stroke="#2a1800" stroke-width="1.1" fill="none"/><path d="M3 6.5L5 7.8L3.4 9.6Z" fill="#2a1800"/><text x="5.5" y="9.8" font-family="Liberation Sans, sans-serif" font-size="6.5" font-weight="bold" fill="#2a1800" letter-spacing="-0.3">XYZ</text></svg>
<svg style="left:822.5px;top:460.5px" width="13" height="12" viewBox="0 0 13 12"><path d="M8 4.5A3.2 3.2 0 1 0 5 8" stroke="#d8d8d8" stroke-width="1.1" fill="none"/><path d="M3.5 6.8L5.6 8.2L3.9 10Z" fill="#d8d8d8"/><text x="7" y="10.5" font-family="Liberation Sans, sans-serif" font-size="6" font-weight="bold" fill="#d8d8d8">Y</text></svg>
<svg style="left:826.5px;top:475px" width="13" height="12" viewBox="0 0 13 12"><path d="M8 4.5A3.2 3.2 0 1 0 5 8" stroke="#d8d8d8" stroke-width="1.1" fill="none"/><path d="M3.5 6.8L5.6 8.2L3.9 10Z" fill="#d8d8d8"/><text x="7" y="10.5" font-family="Liberation Sans, sans-serif" font-size="6" font-weight="bold" fill="#d8d8d8">Z</text></svg>
<div style="left:814.5px;top:492px;width:29.5px;height:28px;background:#333331;border-radius:2px;"></div>
<div class="t" style="left:811.5px;top:508.5px;width:35.5px;text-align:center;height:8px;line-height:8px;font-size:6.5px;letter-spacing:-0.3px;color:#d6d6d6">Centrer</div>
<svg style="left:820px;top:496px" width="19" height="14" viewBox="0 0 19 14"><g fill="#e6e6e6"><rect x="1" y="1" width="2.4" height="2.4"/><rect x="15.5" y="1" width="2.4" height="2.4"/><rect x="1" y="10" width="2.4" height="2.4"/><rect x="15.5" y="10" width="2.4" height="2.4"/><rect x="5" y="4" width="1.6" height="1.6"/><rect x="12.4" y="4" width="1.6" height="1.6"/><rect x="5" y="8" width="1.6" height="1.6"/><rect x="12.4" y="8" width="1.6" height="1.6"/><circle cx="9.5" cy="6.8" r="2.6"/></g></svg>
<div style="left:814.5px;top:524px;width:29.5px;height:28px;background:#333331;border-radius:2px;"></div>
<div class="t" style="left:811.5px;top:540.5px;width:35.5px;text-align:center;height:8px;line-height:8px;font-size:6.5px;letter-spacing:-0.3px;color:#d6d6d6">Déplac</div>
<svg style="left:818px;top:527px" width="24" height="16" viewBox="0 0 24 16"><circle cx="15.5" cy="6" r="5.5" fill="#8a8a8a"/><circle cx="14" cy="4.5" r="3" fill="#b4b4b4"/><path d="M2.5 7 L4 4 L5 7 L5.8 2.8 L7 7 L8 2.5 L9 7 L10 4 L10.8 8 L12 7.5 L10.5 13 Q7 15 4.5 13Z" fill="#f0f0f0"/></svg>
<div style="left:814.5px;top:556px;width:29.5px;height:28px;background:#333331;border-radius:2px;"></div>
<div class="t" style="left:811.5px;top:572.5px;width:35.5px;text-align:center;height:8px;line-height:8px;font-size:6.5px;letter-spacing:-0.3px;color:#d6d6d6">Zoom3D</div>
<svg style="left:818px;top:559px" width="24" height="17" viewBox="0 0 24 17"><circle cx="16" cy="6" r="5.5" fill="#8a8a8a"/><circle cx="14.8" cy="4.6" r="3" fill="#b4b4b4"/><circle cx="10" cy="6.5" r="4" fill="none" stroke="#eaeaea" stroke-width="1.5"/><path d="M7 9.5 L1.8 14.5" stroke="#eaeaea" stroke-width="2" stroke-linecap="round"/></svg>
<div style="left:814.5px;top:588.5px;width:29.5px;height:28px;background:#333331;border-radius:2px;"></div>
<div class="t" style="left:811.5px;top:605.0px;width:35.5px;text-align:center;height:8px;line-height:8px;font-size:6.5px;letter-spacing:-0.3px;color:#d6d6d6">Rotation</div>
<svg style="left:818px;top:591px" width="24" height="17" viewBox="0 0 24 17"><circle cx="12" cy="10" r="5.5" fill="#8a8a8a"/><circle cx="10.8" cy="8.6" r="3" fill="#b4b4b4"/><path d="M6 7A4.5 4.5 0 1 1 12 9" stroke="#eaeaea" stroke-width="1.6" fill="none"/><path d="M17 8Q21 10 18 14" stroke="#eaeaea" stroke-width="1.6" fill="none"/><path d="M15.5 13L19.5 15.5L19.5 11.5Z" fill="#eaeaea"/></svg>
<div style="left:814.5px;top:620px;width:29.5px;height:26.5px;background:#2c2c2b;border-radius:2px;"></div>
<div class="t" style="left:811.5px;top:637.0px;width:35.5px;text-align:center;height:8px;line-height:8px;font-size:6.5px;letter-spacing:-0.3px;color:#d6d6d6">PolyF</div>
<div class="t" style="left:812px;top:620.5px;width:35px;text-align:center;height:7px;line-height:7px;font-size:5.8px;font-weight:bold;letter-spacing:-0.1px;color:#d6d6d6">Line Fill</div>
<svg style="left:820.5px;top:627px" width="18" height="9" viewBox="0 0 18 11" preserveAspectRatio="none"><g stroke="#e0e0e0" stroke-width="0.9" fill="none"><rect x="0.5" y="0.5" width="17" height="10"/><path d="M6 0.5V10.5 M12 0.5V10.5 M0.5 5.5H17.5"/></g></svg>
<div style="left:814.5px;top:652.5px;width:29.5px;height:26px;background:#2c2c2b;border-radius:2px;"></div>
<div class="t" style="left:811.5px;top:669.0px;width:35.5px;text-align:center;height:8px;line-height:8px;font-size:6.5px;letter-spacing:-0.3px;color:#d6d6d6">Transp</div>
<svg style="left:820px;top:654px" width="20" height="15" viewBox="0 0 20 15"><rect x="7.5" y="1.5" width="10" height="9" fill="none" stroke="#7a7a7a" stroke-width="0.9"/><circle cx="7.5" cy="9" r="5" fill="#9a9a9a"/><circle cx="6" cy="7.5" r="2.6" fill="#c8c8c8"/></svg>
<div style="left:814.5px;top:684px;width:30px;height:29.5px;background:#96602a;border-radius:3px;"></div>
<svg style="left:819px;top:687px" width="22" height="16" viewBox="0 0 22 16"><path d="M5 10 Q9 2 17 3 L13 7 L18 7 Q12 14 5 13Z" fill="#6e4418"/></svg>
<div class="t" style="left:812px;top:704px;width:35px;text-align:center;height:8px;line-height:8px;font-size:6.5px;letter-spacing:-0.3px;color:#6e4418">Fantôm</div>
<div style="left:814.5px;top:716px;width:29.5px;height:25px;background:#2c2c2b;border-radius:2px;"></div>
<div class="t" style="left:811.5px;top:731.5px;width:35.5px;text-align:center;height:8px;line-height:8px;font-size:6.5px;letter-spacing:-0.3px;color:#d6d6d6">Solo</div>
<div class="t" style="left:812px;top:716.5px;width:35px;text-align:center;height:7px;line-height:7px;font-size:5.8px;font-weight:bold;letter-spacing:-0.1px;color:#555">Dynamic</div>
<svg style="left:818px;top:721px" width="24" height="13" viewBox="0 0 24 13"><circle cx="6" cy="7.5" r="4.5" fill="#8a8a8a"/><circle cx="17.5" cy="7.5" r="4.5" fill="#9a9a9a"/><circle cx="11.8" cy="5.5" r="5.2" fill="#e6e6e6"/></svg>
<div style="left:814.5px;top:748.5px;width:29.5px;height:28.5px;background:#333331;border-radius:2px;"></div>
<div class="t" style="left:811.5px;top:765.5px;width:35.5px;text-align:center;height:8px;line-height:8px;font-size:6.5px;letter-spacing:-0.3px;color:#d6d6d6">Eclaté</div>
<svg style="left:819.5px;top:751px" width="20" height="16" viewBox="0 0 20 16"><g stroke="#e6e6e6" stroke-width="1" fill="#e6e6e6"><path d="M2 2L5 5 M18 2L15 5 M2 14L5 11 M18 14L15 11" fill="none"/><path d="M1 1H4L1 4Z M19 1H16L19 4Z M1 15H4L1 12Z M19 15H16L19 12Z" stroke="none"/><path d="M0.5 8H3 M17 8H19.5" fill="none"/><circle cx="10" cy="8" r="0.9" stroke="none"/></g></svg>
<div style="left:850.5px;top:432px;width:4px;height:87px;background:#3a3a3a;border-radius:1px;"></div>
<svg style="left:849.5px;top:468px" width="7" height="16" viewBox="0 0 7 16"><rect x="0" y="0" width="7" height="16" fill="#2e2e2e"/><path d="M1 0.5L6 4L1 7.5Z" fill="#505050" stroke="#222" stroke-width="0.6"/><path d="M6 8.5L1 12L6 15.5Z" fill="#505050" stroke="#222" stroke-width="0.6"/></svg>
<div style="left:873.5px;top:22px;width:132px;height:246px;background:#2d2d2d;border-radius:5px;box-shadow:0 0 0 1.4px #1c1c1c, inset 0 0 0 1px #393939;"></div>
<div class="b" style="left:876px;top:26px;width:62px;height:12.5px;line-height:12.5px;background:#3b3b3b;border-radius:2px;padding-left:2.5px;box-sizing:border-box;color:#dadada;font-size:9px;letter-spacing:-0.28px;box-shadow:0 0 0 0.8px #242424;">Ouvrir Tool</div>
<div class="b" style="left:940.5px;top:26px;width:61.5px;height:12.5px;line-height:12.5px;background:#3b3b3b;border-radius:2px;padding-left:2.5px;box-sizing:border-box;color:#dadada;font-size:9px;letter-spacing:-0.28px;box-shadow:0 0 0 0.8px #242424;">Enregistrer</div>
<div class="b" style="left:876px;top:42px;width:62px;height:12.5px;line-height:12.5px;background:#3b3b3b;border-radius:2px;padding-left:2.5px;box-sizing:border-box;color:#dadada;font-size:9px;letter-spacing:-0.28px;box-shadow:0 0 0 0.8px #242424;">Sauvg.</div>
<div class="b" style="left:940.5px;top:42px;width:61.5px;height:12.5px;line-height:12.5px;background:#3b3b3b;border-radius:2px;padding-left:2.5px;box-sizing:border-box;color:#dadada;font-size:9px;letter-spacing:-0.28px;box-shadow:0 0 0 0.8px #242424;">Enregistrer suiv</div>
<div class="b" style="left:876px;top:58px;width:126px;height:12.5px;line-height:12.5px;background:#3b3b3b;border-radius:2px;padding-left:2.5px;box-sizing:border-box;color:#dadada;font-size:9px;letter-spacing:-0.28px;box-shadow:0 0 0 0.8px #242424;">Charger Tool depuis Projet</div>
<div class="b" style="left:876px;top:74px;width:62px;height:12.5px;line-height:12.5px;background:#3b3b3b;border-radius:2px;padding-left:2.5px;box-sizing:border-box;color:#dadada;font-size:9px;letter-spacing:-0.28px;box-shadow:0 0 0 0.8px #242424;">Copier Tool</div>
<div class="b" style="left:940.5px;top:74px;width:61.5px;height:12.5px;line-height:12.5px;background:#323232;border-radius:2px;padding-left:2.5px;box-sizing:border-box;color:#555;font-size:9px;letter-spacing:-0.28px;box-shadow:0 0 0 0.8px #242424;">Coller Tool</div>
<div class="b" style="left:876px;top:90px;width:62px;height:12.5px;line-height:12.5px;background:#3b3b3b;border-radius:2px;padding-left:2.5px;box-sizing:border-box;color:#dadada;font-size:9px;letter-spacing:-0.28px;box-shadow:0 0 0 0.8px #242424;">Importer</div>
<div class="b" style="left:940.5px;top:90px;width:61.5px;height:12.5px;line-height:12.5px;background:#3b3b3b;border-radius:2px;padding-left:2.5px;box-sizing:border-box;color:#dadada;font-size:9px;letter-spacing:-0.28px;box-shadow:0 0 0 0.8px #242424;">Exporter</div>
<div class="b" style="left:876px;top:106px;width:29.5px;height:12.5px;line-height:12.5px;background:#3b3b3b;border-radius:2px;padding-left:2.5px;box-sizing:border-box;color:#dadada;font-size:9px;letter-spacing:-0.28px;box-shadow:0 0 0 0.8px #242424;">Cloner</div>
<div class="b" style="left:908.3px;top:106px;width:93.7px;height:12.5px;line-height:12.5px;background:#3b3b3b;border-radius:2px;padding-left:2.5px;box-sizing:border-box;color:#dadada;font-size:9px;letter-spacing:-0.28px;box-shadow:0 0 0 0.8px #242424;">Convertir PolyMesh3D</div>
<div class="b" style="left:876px;top:122px;width:29.5px;height:12.5px;line-height:12.5px;background:#3b3b3b;border-radius:2px;padding-left:2.5px;box-sizing:border-box;color:#dadada;font-size:9px;letter-spacing:-0.28px;box-shadow:0 0 0 0.8px #242424;">GoZ</div>
<div class="b" style="left:908.3px;top:122px;width:29.7px;height:12.5px;line-height:12.5px;background:#3b3b3b;border-radius:2px;padding-left:2.5px;box-sizing:border-box;color:#dadada;font-size:9px;letter-spacing:-0.28px;box-shadow:0 0 0 0.8px #242424;">Tout</div>
<div class="b" style="left:940.5px;top:122px;width:45.5px;height:12.5px;line-height:12.5px;background:#3b3b3b;border-radius:2px;padding-left:2.5px;box-sizing:border-box;color:#dadada;font-size:9px;letter-spacing:-0.28px;box-shadow:0 0 0 0.8px #242424;">Visible</div>
<div class="b" style="left:988.8px;top:122px;width:13.2px;height:12.5px;line-height:12.5px;background:#3b3b3b;border-radius:2px;padding-left:2.5px;box-sizing:border-box;color:#dadada;font-size:9px;letter-spacing:-0.28px;box-shadow:0 0 0 0.8px #242424;">R</div>
<div class="b" style="left:876px;top:138.5px;width:126px;height:12.5px;line-height:12.5px;background:#3b3b3b;border-radius:2px;padding-left:2.5px;box-sizing:border-box;color:#dadada;font-size:9px;letter-spacing:-0.28px;box-shadow:0 0 0 0.8px #242424;">Lightbox<span style="font-size:10px;letter-spacing:0;padding:0 1px 0 1.5px;position:relative;top:0.3px">▶</span>Tools</div>
<div class="t" style="left:878.5px;top:152.5px;height:12px;line-height:12px;color:#e0e0e0;font-size:9px;letter-spacing:-0.28px;">result (1). 41</div>
<div style="left:878px;top:165px;width:106px;height:1px;background:linear-gradient(90deg,#666 0,#666 80%,rgba(90,90,90,0.2) 100%)"></div>
<div style="left:962px;top:163.5px;width:10px;height:4px;background:#f7931e;border-radius:2px"></div>
<div class="b" style="left:988.8px;top:154.5px;width:13.2px;height:12.5px;line-height:12.5px;background:#3b3b3b;border-radius:2px;padding-left:3px;box-sizing:border-box;color:#dadada;font-size:9px;letter-spacing:-0.28px;box-shadow:0 0 0 0.8px #242424;">R</div>
<div style="left:876px;top:169.5px;width:62.5px;height:62px;background:#3a3a38;border-radius:2px;box-shadow:0 0 0 1px #1c1c1c;"></div>
<div style="left:876px;top:220px;width:62.5px;height:11.5px;background:#444442;border-radius:0 0 2px 2px"></div>
<div style="left:876px;top:234.5px;width:62.5px;height:29.5px;background:#3a3a38;border-radius:2px;box-shadow:0 0 0 1px #1c1c1c;"></div>
<div style="left:876px;top:252px;width:62.5px;height:12px;background:#444442;border-radius:0 0 2px 2px"></div>
<svg style="left:876px;top:169.5px" width="62.5" height="62" viewBox="-31.25 -50.5 62.5 62"><defs><g id="mini"><ellipse cx="0" cy="-40" rx="6.3" ry="7" fill="#d8883a"/><path d="M-6.5 -41 Q-7 -49 0 -49 Q7 -49 6.5 -41 Q4 -45 0 -44.5 Q-4 -45 -6.5 -41Z" fill="#0a0c10"/><path d="M-5.5 -37 Q0 -30 5.5 -37 Q4 -33.5 0 -33 Q-4 -33.5 -5.5 -37Z" fill="#3c3a38"/><circle cx="-2.4" cy="-40.5" r="1" fill="#221"/><circle cx="2.6" cy="-40.5" r="1" fill="#221"/><path d="M-10.5 -22 L-11.5 -8 Q-10 -4 -8 -8 L-7.5 -22Z M10.5 -22 L11.5 -8 Q10 -4 8 -8 L7.5 -22Z" fill="#d8883a"/><path d="M-4 -33 Q-11 -31 -11.5 -21 L-7.5 -19.5 L-7.5 -6 L7.5 -6 L7.5 -19.5 L11.5 -21 Q11 -31 4 -33 Q0 -30.5 -4 -33Z" fill="#e6e6e6"/><path d="M-7 -6.5 L-7 12 L-1 12 L0 -1 L1 12 L7 12 L7 -6.5Z" fill="#0b55aa"/><path d="M-10 15.5 Q-8 11 -1 12 L-1 16Z M10 15.5 Q8 11 1 12 L1 16Z" fill="#e8e8e8"/></g></defs><use href="#mini" transform="translate(0,-11.6) scale(0.86,0.78)"/></svg>
<svg style="left:876px;top:234.5px" width="62.5" height="29.5" viewBox="-31.25 0 62.5 29.5"><use href="#mini" transform="translate(0.5,16.9) scale(0.39,0.35)"/></svg>
<div class="t" style="left:876px;top:220px;width:62.5px;text-align:center;height:11.5px;line-height:11.5px;color:#c0c0c0;font-size:9px;letter-spacing:-0.28px;">result (1)</div>
<div class="t" style="left:876px;top:252px;width:62.5px;text-align:center;height:12px;line-height:12px;color:#c0c0c0;font-size:9px;letter-spacing:-0.28px;">result (1)</div>
<div class="t" style="left:931px;top:171.5px;height:12px;line-height:12px;color:#e0e0e0;font-size:9.5px">2</div>
<div class="t" style="left:931px;top:236.5px;height:12px;line-height:12px;color:#e0e0e0;font-size:9.5px">2</div>
<svg style="left:955px;top:168px" width="34" height="28" viewBox="0 0 34 28"><defs><linearGradient id="gc" x1="0" x2="1"><stop offset="0" stop-color="#d8d8d8"/><stop offset="0.5" stop-color="#c2c2c2"/><stop offset="1" stop-color="#8a8a8a"/></linearGradient></defs><g transform="rotate(-14 17 14)"><path d="M7 5V22Q17 27 27 22V5Z" fill="url(#gc)"/><ellipse cx="17" cy="5" rx="10" ry="3.6" fill="#e9e9e9"/></g></svg>
<svg style="left:959px;top:202px" width="26" height="26" viewBox="-13 -13 26 26"><path d="M0 -12L2.5 -3.5L10.5 -7L4 -0.5L11.5 3L3 3L4.5 11.5L-0.5 4.5L-6.5 10L-3.5 2L-11.5 0.5L-4 -2.5L-7.5 -9L-1 -4Z" fill="#dcdcdc"/><path d="M0 -12L2.5 -3.5L-1 -4Z M11.5 3L3 3L4 -0.5Z M-6.5 10L-3.5 2L-0.5 4.5Z" fill="#a8a8a8"/></svg>
<svg style="left:960px;top:234px" width="24" height="24" viewBox="0 0 24 24"><defs><linearGradient id="gs" x1="0" x2="0" y1="0" y2="1"><stop offset="0" stop-color="#ffd34a"/><stop offset="0.5" stop-color="#f39a12"/><stop offset="1" stop-color="#b35a08"/></linearGradient></defs><path d="M17 5.5Q15 2.5 11 3Q6.5 4 7.5 8Q8.5 11 13 12Q18 13.5 17 17.5Q15.5 21.5 9.5 20.5Q5.5 19.5 4.5 16" stroke="url(#gs)" stroke-width="5" fill="none" stroke-linecap="round"/><path d="M15 4.5Q12 3 9.5 5" stroke="#fff0b0" stroke-width="1.2" fill="none" stroke-linecap="round"/></svg>
<div class="t" style="left:940px;top:188.5px;width:64px;text-align:center;height:12px;line-height:12px;color:#d6d6d6;font-size:9px;letter-spacing:-0.28px;">Cylinder3D</div>
<div class="t" style="left:940px;top:221px;width:64px;text-align:center;height:12px;line-height:12px;color:#d6d6d6;font-size:9px;letter-spacing:-0.28px;">PolyMesh3D</div>
<div class="t" style="left:940px;top:253px;width:64px;text-align:center;height:12px;line-height:12px;color:#d6d6d6;font-size:9px;letter-spacing:-0.28px;">SimpleBrush</div>
<div class="t lst" style="left:881.7px;top:274.75px;height:12px;line-height:12px;font-size:9px;letter-spacing:-0.28px;">SubTool</div>
<div class="t lst" style="left:881.7px;top:290.815px;height:12px;line-height:12px;font-size:9px;letter-spacing:-0.28px;">Géométrie</div>
<div class="t lst" style="left:881.7px;top:306.88px;height:12px;line-height:12px;font-size:9px;letter-spacing:-0.28px;">ArrayMesh</div>
<div class="t lst" style="left:881.7px;top:322.945px;height:12px;line-height:12px;font-size:9px;letter-spacing:-0.28px;">NanoMesh</div>
<div class="t lst" style="left:881.7px;top:339.01px;height:12px;line-height:12px;font-size:9px;letter-spacing:-0.28px;">Slime Bridge</div>
<div class="t lst" style="left:881.7px;top:355.075px;height:12px;line-height:12px;font-size:9px;letter-spacing:-0.28px;">Peau épaisse</div>
<div class="t lst" style="left:881.7px;top:371.14px;height:12px;line-height:12px;font-size:9px;letter-spacing:-0.28px;">Calques 3D</div>
<div class="t lst" style="left:881.7px;top:387.20500000000004px;height:12px;line-height:12px;font-size:9px;letter-spacing:-0.28px;">FiberMesh</div>
<div class="t lst" style="left:881.7px;top:403.27px;height:12px;line-height:12px;font-size:9px;letter-spacing:-0.28px;">Géometrie HD</div>
<div class="t lst" style="left:881.7px;top:419.33500000000004px;height:12px;line-height:12px;font-size:9px;letter-spacing:-0.28px;">Aperçu</div>
<div class="t lst" style="left:881.7px;top:435.4px;height:12px;line-height:12px;font-size:9px;letter-spacing:-0.28px;">Surface</div>
<div class="t lst" style="left:881.7px;top:451.46500000000003px;height:12px;line-height:12px;font-size:9px;letter-spacing:-0.28px;">Déformation</div>
<div class="t lst" style="left:881.7px;top:467.53000000000003px;height:12px;line-height:12px;font-size:9px;letter-spacing:-0.28px;">Masque</div>
<div class="t lst" style="left:881.7px;top:483.595px;height:12px;line-height:12px;font-size:9px;letter-spacing:-0.28px;">Visibilité</div>
<div class="t lst" style="left:881.7px;top:499.66px;height:12px;line-height:12px;font-size:9px;letter-spacing:-0.28px;">PolyGroupes</div>
<div class="t lst" style="left:881.7px;top:515.725px;height:12px;line-height:12px;font-size:9px;letter-spacing:-0.28px;">Contact</div>
<div class="t lst" style="left:881.7px;top:531.79px;height:12px;line-height:12px;font-size:9px;letter-spacing:-0.28px;">Morph Target</div>
<div style="left:872.5px;top:547.5px;width:133.5px;height:208px;background:#2d2d2d;border-radius:5px;box-shadow:0 0 0 1.4px #1c1c1c, inset 0 0 0 1px #393939;"></div>
<div class="t lst" style="left:881.7px;top:548.0px;height:12px;line-height:12px;font-size:9px;letter-spacing:-0.28px;">PolyPaint</div>
<div class="b" style="left:876px;top:562px;width:94px;height:12.5px;line-height:12.5px;background:#f7931e;border-radius:2px;padding-left:2.5px;box-sizing:border-box;color:#2a1800;font-size:9px;letter-spacing:-0.28px;box-shadow:0 0 0 0.8px #242424;">Colorisation</div>
<div class="b" style="left:972.5px;top:562px;width:29.5px;height:12.5px;line-height:12.5px;background:#f7931e;border-radius:2px;padding-left:2.5px;box-sizing:border-box;color:#2a1800;font-size:9px;letter-spacing:-0.28px;box-shadow:0 0 0 0.8px #242424;">Dégr.</div>
<div class="b" style="left:876px;top:578px;width:62px;height:12.5px;line-height:12.5px;background:#3b3b3b;border-radius:2px;padding-left:2.5px;box-sizing:border-box;color:#dadada;font-size:9px;letter-spacing:-0.28px;box-shadow:0 0 0 0.8px #242424;">Remp. Coul</div>
<div class="b" style="left:940.3px;top:578px;width:61.7px;height:12.5px;line-height:12.5px;background:#3b3b3b;border-radius:2px;padding-left:2.5px;box-sizing:border-box;color:#dadada;font-size:9px;letter-spacing:-0.28px;box-shadow:0 0 0 0.8px #242424;">Remp. Dg.</div>
<div class="b" style="left:876px;top:594px;width:126px;height:12.5px;line-height:12.5px;background:#323232;border-radius:2px;padding-left:2.5px;box-sizing:border-box;color:#565656;font-size:9px;letter-spacing:-0.28px;box-shadow:0 0 0 0.8px #242424;">Polypaint depuis texture</div>
<div class="b" style="left:876px;top:610px;width:126px;height:12.5px;line-height:12.5px;background:#3b3b3b;border-radius:2px;padding-left:2.5px;box-sizing:border-box;color:#dadada;font-size:9px;letter-spacing:-0.28px;box-shadow:0 0 0 0.8px #242424;">Polypaint depuis PolyGroupes</div>
<div class="b" style="left:876px;top:626px;width:126px;height:12.5px;line-height:12.5px;background:#3b3b3b;border-radius:2px;padding-left:2.5px;box-sizing:border-box;color:#dadada;font-size:9px;letter-spacing:-0.28px;box-shadow:0 0 0 0.8px #242424;">Ajustement des couleurs</div>
<div class="b" style="left:876px;top:642px;width:126px;height:12.5px;line-height:12.5px;background:#3b3b3b;border-radius:2px;padding-left:2.5px;box-sizing:border-box;color:#dadada;font-size:9px;letter-spacing:-0.28px;box-shadow:0 0 0 0.8px #242424;">Retourner selon symétrie posable</div>
<div class="b" style="left:876px;top:658px;width:126px;height:12.5px;line-height:12.5px;background:#3b3b3b;border-radius:2px;padding-left:2.5px;box-sizing:border-box;color:#dadada;font-size:9px;letter-spacing:-0.28px;box-shadow:0 0 0 0.8px #242424;">Refléter par symétrie posable</div>
<div class="b" style="left:876px;top:674px;width:62px;height:29px;line-height:29px;background:#3b3b3b;border-radius:2px;padding-left:2.5px;box-sizing:border-box;color:#dadada;font-size:9px;letter-spacing:-0.28px;box-shadow:0 0 0 0.8px #242424;">Dépouille</div>
<div class="t" style="left:942.6px;top:673.5px;height:12px;line-height:12px;color:#e0e0e0;font-size:9px;letter-spacing:-0.28px;">Angle 2</div>
<div style="left:942px;top:685px;width:60px;height:1px;background:linear-gradient(90deg,#666 0,#666 80%,rgba(90,90,90,0.2) 100%)"></div>
<div style="left:964px;top:683.5px;width:9.5px;height:4px;background:#f7931e;border-radius:2px"></div>
<div class="b" style="left:940.5px;top:690.5px;width:30px;height:12px;line-height:12px;background:#3b3b3b;border-radius:2px;padding-left:2.5px;box-sizing:border-box;color:#dadada;font-size:9px;letter-spacing:-0.28px;box-shadow:0 0 0 0.8px #242424;">Directi.</div>
<div class="b" style="left:972.6px;top:690.5px;width:29.4px;height:12px;line-height:12px;background:#3b3b3b;border-radius:2px;padding-left:2.5px;box-sizing:border-box;color:#dadada;font-size:9px;letter-spacing:-0.28px;box-shadow:0 0 0 0.8px #242424;">Inv.</div>
<div class="b" style="left:876px;top:706px;width:62px;height:44.5px;line-height:44.5px;background:#3b3b3b;border-radius:2px;padding-left:2.5px;box-sizing:border-box;color:#dadada;font-size:9px;letter-spacing:-0.28px;box-shadow:0 0 0 0.8px #242424;">Epaisseur</div>
<div class="t" style="left:942.6px;top:705.0px;height:12px;line-height:12px;color:#e0e0e0;font-size:9px;letter-spacing:-0.28px;">Qualité 16</div>
<div style="left:942px;top:717px;width:60px;height:1px;background:linear-gradient(90deg,#666 0,#666 80%,rgba(90,90,90,0.2) 100%)"></div>
<div style="left:952.8px;top:715.5px;width:9.5px;height:4px;background:#f7931e;border-radius:2px"></div>
<div class="t" style="left:942.6px;top:721.0px;height:12px;line-height:12px;color:#e0e0e0;font-size:9px;letter-spacing:-0.28px;">Epaisseur Min</div>
<div style="left:942px;top:733px;width:60px;height:1px;background:linear-gradient(90deg,#666 0,#666 80%,rgba(90,90,90,0.2) 100%)"></div>
<div style="left:961.5px;top:731.5px;width:9.5px;height:4px;background:#f7931e;border-radius:2px"></div>
<div class="t" style="left:942.6px;top:737.0px;height:12px;line-height:12px;color:#e0e0e0;font-size:9px;letter-spacing:-0.28px;">Epaisseur Max</div>
<div style="left:942px;top:749px;width:60px;height:1px;background:linear-gradient(90deg,#666 0,#666 80%,rgba(90,90,90,0.2) 100%)"></div>
<div style="left:969px;top:747.5px;width:9.5px;height:4px;background:#f7931e;border-radius:2px"></div>
<div class="t lst" style="left:881.7px;top:763.0px;height:12px;line-height:12px;font-size:9px;letter-spacing:-0.28px;">Coordonnées de textures</div>
<div class="t lst" style="left:881.7px;top:779.05px;height:12px;line-height:12px;font-size:9px;letter-spacing:-0.28px;">Textures</div>
<div class="t lst" style="left:881.7px;top:795.1px;height:12px;line-height:12px;font-size:9px;letter-spacing:-0.28px;">Textures de déplacement</div>
<div class="t lst" style="left:881.7px;top:811.15px;height:12px;line-height:12px;font-size:9px;letter-spacing:-0.28px;">Texture de normales</div>
<div class="t lst" style="left:881.7px;top:827.2px;height:12px;line-height:12px;font-size:9px;letter-spacing:-0.28px;">Texture déplacement vectoriel</div>
<div class="t lst" style="left:881.7px;top:843.25px;height:12px;line-height:12px;font-size:9px;letter-spacing:-0.28px;">Propriétés d'affichage</div>
<div class="t lst" style="left:881.7px;top:859.3px;height:12px;line-height:12px;font-size:9px;letter-spacing:-0.28px;">Peau unifiée</div>
<div class="t lst" style="left:881.7px;top:875.35px;height:12px;line-height:12px;font-size:9px;letter-spacing:-0.28px;">Initialisation</div>
<div class="t lst" style="left:881.7px;top:891.4px;height:12px;line-height:12px;font-size:9px;letter-spacing:-0.28px;">Importer</div>
<div class="t lst" style="left:881.7px;top:907.45px;height:12px;line-height:12px;font-size:9px;letter-spacing:-0.28px;">Exporter</div>
<div class="b" style="left:81px;top:889px;width:61.5px;height:13.5px;line-height:13.5px;background:#363636;border-radius:2px;padding-left:2.5px;box-sizing:border-box;color:#d6d6d6;">Niveau Sup.</div>
<div class="b" style="left:81px;top:905.5px;width:61.5px;height:13px;line-height:13px;background:#2c2c2c;border-radius:2px;padding-left:2.5px;box-sizing:border-box;color:#4a4a4a;">Effacer Sup.</div>
<div class="b" style="left:146px;top:889px;width:124.5px;height:13.5px;line-height:13.5px;background:#363636;border-radius:2px;padding-left:2.5px;box-sizing:border-box;color:#d6d6d6;">Séparer points non masqués</div>
<div class="b" style="left:146px;top:905.5px;width:124.5px;height:13px;line-height:13px;background:#363636;border-radius:2px;padding-left:2.5px;box-sizing:border-box;color:#d6d6d6;">Séparer points masqués</div>
<div class="b" style="left:273.3px;top:889px;width:62px;height:13.5px;line-height:13.5px;background:#363636;border-radius:2px;padding-left:2.5px;box-sizing:border-box;color:#d6d6d6;">Faces arrières</div>
<div class="b" style="left:273.3px;top:905.5px;width:62px;height:13px;line-height:13px;background:#363636;border-radius:2px;padding-left:2.5px;box-sizing:border-box;color:#d6d6d6;">Fermer Trous</div>
<div class="b" style="left:402px;top:889.5px;width:62px;height:13.5px;line-height:13.5px;background:#2c2c2c;border-radius:2px;padding-left:1px;box-sizing:border-box;color:#d6d6d6;"></div>
<div class="b" style="left:402px;top:906.5px;width:62px;height:14px;line-height:14px;background:#2c2c2c;border-radius:2px;padding-left:1px;box-sizing:border-box;color:#d6d6d6;"></div>
<div class="b" style="left:338px;top:889px;width:95px;height:29.5px;line-height:29.5px;background:rgba(64,64,64,0.75);border-radius:2px;padding-left:2.5px;box-sizing:border-box;color:#d6d6d6">ZRemesher</div>
<div class="t" style="left:404.7px;top:889.5px;height:12px;line-height:12px;color:#d6d6d6">Vérouill. Grp.</div>
<div class="t" style="left:404.7px;top:907.5px;height:12px;line-height:12px;color:#d6d6d6">Garder Grp.</div>
<div class="t" style="left:469px;top:888.5px;height:12px;line-height:12px;color:#dedede">Cible nombre Polygones 5</div>
<div style="left:469px;top:900px;width:123px;height:1px;background:linear-gradient(90deg,#555 0,#555 80%,rgba(90,90,90,0.2) 100%)"></div>
<div style="left:492px;top:898.5px;width:9.5px;height:4px;background:#f7931e;border-radius:2px"></div>
<div class="b" style="left:593.5px;top:889px;width:62px;height:29.5px;line-height:29.5px;background:#2c2c2c;border-radius:2px;padding-left:5.5px;box-sizing:border-box;color:#d6d6d6;">DynaMesh</div>
<div class="t" style="left:661.6px;top:890.5px;height:12px;line-height:12px;color:#d6d6d6">Groupe</div>
<div class="t" style="left:661.6px;top:904.0px;height:12px;line-height:12px;color:#d6d6d6">Liss. 2</div>
<div style="left:660px;top:917px;width:30px;height:1px;background:linear-gradient(90deg,#555 0,#555 80%,rgba(90,90,90,0.2) 100%)"></div>
<div style="left:659.6px;top:915.5px;width:9.5px;height:4px;background:#f7931e;border-radius:2px"></div>
<svg style="left:681px;top:906.5px" width="6" height="6" viewBox="0 0 6 6"><path d="M0.5 5.5L5 1M2 0.8H5.2V4" stroke="#d6d6d6" stroke-width="1.1" fill="none"/></svg>
<div class="t" style="left:693.6px;top:888.5px;height:12px;line-height:12px;color:#dedede">Résolution 128</div>
<div style="left:693px;top:900px;width:88px;height:1px;background:linear-gradient(90deg,#555 0,#555 80%,rgba(90,90,90,0.2) 100%)"></div>
<div style="left:705px;top:898.5px;width:9.5px;height:4px;background:#f7931e;border-radius:2px"></div>
<div style="left:779.7px;top:891.2px;width:3.6px;height:3.6px;background:#d0d0d0;border-radius:2px;"></div>
<div class="b" style="left:786.5px;top:889px;width:24px;height:29.5px;line-height:29.5px;background:#363636;border-radius:2px;padding-left:2px;box-sizing:border-box;color:#d6d6d6;">Divise</div>
<div style="left:403px;top:926px;width:86px;height:3.8px;background:#555;"></div>
<svg style="left:438px;top:925px" width="16" height="7" viewBox="0 0 16 7"><rect width="16" height="7" fill="#292929"/><path d="M1 6L4.5 1L8 6Z M8 1L11.5 6L15 1Z" fill="#e0e0e0"/></svg>
</div>
</body></html>
